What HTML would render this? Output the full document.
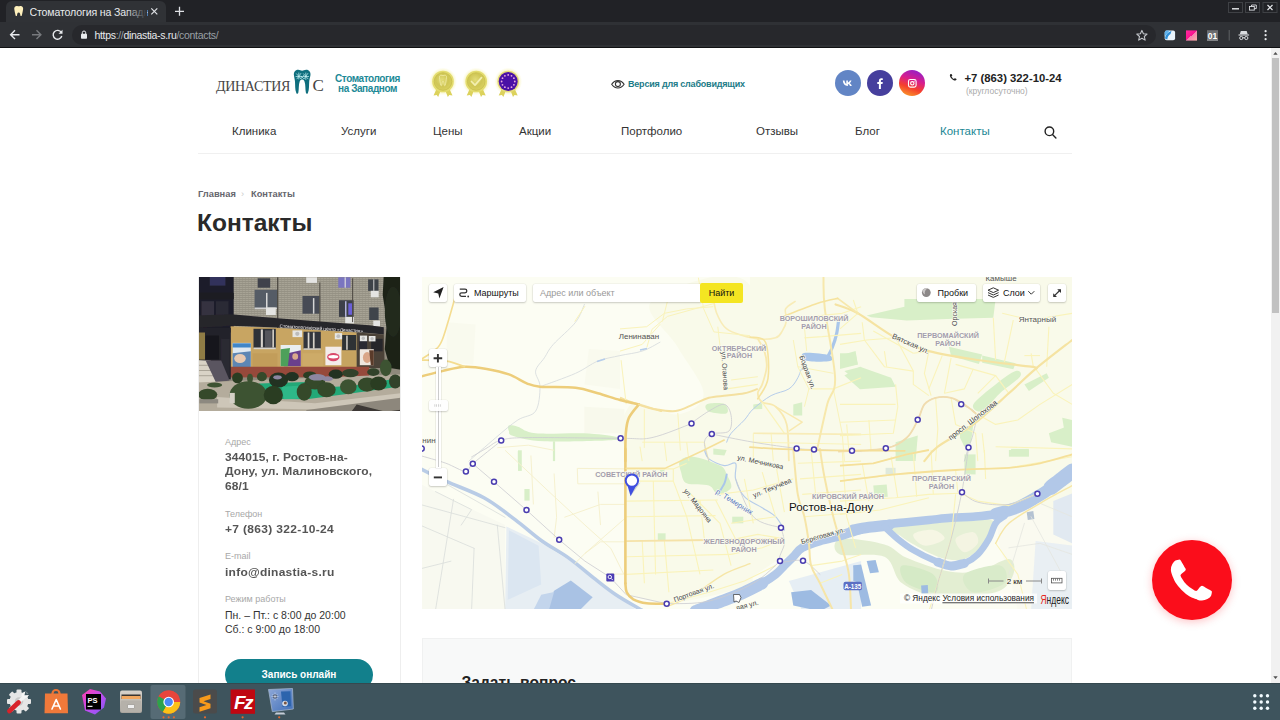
<!DOCTYPE html>
<html lang="ru">
<head>
<meta charset="utf-8">
<title>Стоматология на Западном</title>
<style>
*{box-sizing:border-box;margin:0;padding:0}
html,body{width:1280px;height:720px;overflow:hidden;background:#fff}
body{position:relative;font-family:"Liberation Sans",sans-serif;color:#333}
.abs{position:absolute}
/* ---------- browser chrome ---------- */
#tabstrip{left:0;top:0;width:1280px;height:23px;background:#212226}
#tab{left:5.5px;top:1px;width:160px;height:22px;background:#303236;border-radius:6px 6px 0 0}
#tabtitle{left:29.5px;top:3.5px;width:118px;height:16px;overflow:hidden;white-space:nowrap;font:10.6px/16px "Liberation Sans",sans-serif;letter-spacing:-.15px;color:#e8eaed}
#tabfade{left:125px;top:3px;width:22px;height:18px;background:linear-gradient(90deg,rgba(48,50,54,0),#303236)}
#toolbar{left:0;top:22px;width:1280px;height:25px;background:#2f3135}
#toolbarline{left:0;top:46.5px;width:1280px;height:1.5px;background:#101113}
#omni{left:72px;top:25px;width:1084px;height:20px;border-radius:10px;background:#27282c}
#url{left:94.5px;top:28px;font:10.5px/14px "Liberation Sans",sans-serif;letter-spacing:-.32px;color:#e8eaed;white-space:nowrap}
#url span{color:#9aa0a6}
/* ---------- page ---------- */
#page{left:0;top:0;width:1272px;height:684px;background:#fff;overflow:hidden}
#sbar{left:1271px;top:48px;width:9px;height:636px;background:#f1f1f1}
#sthumb{left:1272px;top:58px;width:7px;height:255px;background:#c1c1c1}

/* ---------- site ---------- */
.t{position:absolute;white-space:nowrap;font-family:"Liberation Sans",sans-serif}
#logo1{left:216px;top:77.5px;font:14px/18px "Liberation Serif",serif;color:#444;letter-spacing:-.3px}
#logo2{left:312.5px;top:76px;font:17px/20px "Liberation Serif",serif;color:#444}
#slogan{left:327.5px;top:73.7px;width:80px;text-align:center;font:bold 10px/10.6px "Liberation Sans",sans-serif;letter-spacing:-.42px;color:#1d8a97;white-space:normal}
#vis{left:628px;top:78.3px;font:bold 9px/12px "Liberation Sans",sans-serif;letter-spacing:-.2px;color:#1b7b88}
.soc{position:absolute;top:70px;width:26px;height:26px;border-radius:50%}
#hphone{left:964.5px;top:70.5px;font:bold 11.3px/14px "Liberation Sans",sans-serif;color:#222}
#hphone2{left:966px;top:86px;font:8.5px/11px "Liberation Sans",sans-serif;color:#aaa}
.nav{top:124px;font:11.5px/14px "Liberation Sans",sans-serif;color:#333}
#navline{left:198px;top:153px;width:874px;height:1px;background:#f0f0f0}
.bc{top:187.5px;font:bold 9.3px/12px "Liberation Sans",sans-serif;color:#66666e}
#h1{left:197px;top:208.5px;font:bold 24.5px/28px "Liberation Sans",sans-serif;color:#2a2a2a}
#card{left:198px;top:277px;width:203px;height:420px;border:1px solid #eee;background:#fff}
#photo{left:199px;top:277px;width:201px;height:134px;overflow:hidden;background:#444}
.lbl{left:225px;font:9px/12px "Liberation Sans",sans-serif;color:#a8a8a8}
.val{left:225px;font:bold 12px/15.9px "Liberation Sans",sans-serif;color:#555;transform:scaleY(.9);transform-origin:0 0}
.hrs{left:225px;font:10.5px/14px "Liberation Sans",sans-serif;color:#333}
#btn{left:225px;top:659px;width:148px;height:32px;border-radius:16px;background:#12808c;color:#fff;text-align:center;font:bold 10px/32px "Liberation Sans",sans-serif}
#map{left:422px;top:277px;width:650px;height:332px;overflow:hidden;background:#fbf8e6}
#form{left:422px;top:638px;width:650px;height:80px;background:#f8f9f9;border:1px solid #f0f1f1}
#formh{left:461.5px;top:673.3px;font:bold 15.6px/20px "Liberation Sans",sans-serif;color:#222}
#call{left:1152px;top:540px;width:80px;height:80px;border-radius:50%;background:#fb0d1b;box-shadow:0 2px 8px rgba(250,20,30,.25)}
/* ---------- taskbar ---------- */
#taskbar{left:0;top:683.300px;width:1280px;height:37px;background:#3e545d;border-top:1.300px solid #35494f}
</style>
</head>
<body>
<!-- page -->
<div id="page" class="abs">

<div id="logo1" class="t">ДИНАСТИЯ</div>
<div id="logo2" class="t">С</div>
<div id="slogan" class="t">Стоматология<br>на Западном</div>
<svg class="abs" style="left:420px;top:60px" width="120" height="45" viewBox="420 60 120 45">
<defs>
<radialGradient id="gld" cx="45%" cy="40%" r="60%"><stop offset="0" stop-color="#e2dc78"/><stop offset=".6" stop-color="#cfc655"/><stop offset="1" stop-color="#d9d05e"/></radialGradient>
<radialGradient id="glow" cx="50%" cy="50%" r="50%"><stop offset=".7" stop-color="#f6f1a8" stop-opacity=".9"/><stop offset="1" stop-color="#fbf8d0" stop-opacity="0"/></radialGradient>
</defs>
<g id="m1">
<circle cx="443" cy="81.500" r="14" fill="url(#glow)"/>
<path d="M436.500 89l-3 6.500 3.200-.6 1.500 2 2.300-6zM449.500 89l3 6.500-3.200-.6-1.500 2-2.300-6z" fill="#dcd25c"/>
<circle cx="443" cy="81.500" r="10.800" fill="#e3dc6e"/>
<circle cx="443" cy="81.500" r="8.800" fill="url(#gld)" stroke="#c7bd4c" stroke-width=".8"/>
</g>
<path d="M439.500 77.500c-.3-1.300.5-2.300 1.600-2.300.8 0 1.200.5 1.900.5s1.100-.5 1.900-.5c1.100 0 1.900 1 1.600 2.300-.4 2-.5 5-1.300 7.800-.2.600-.8.600-.9 0-.3-1.800-.3-4-1.300-4s-1 2.200-1.300 4c-.1.600-.7.600-.9 0-.8-2.800-.9-5.800-1.300-7.800z" fill="none" stroke="#efeaa0" stroke-width=".9"/>
<use href="#m1" x="33.200"/>
<path d="M471.500 81.500l3.500 3.600 6.500-7.500" fill="none" stroke="#f3efb0" stroke-width="1.700" stroke-linecap="round" stroke-linejoin="round"/>
<g>
<circle cx="508.200" cy="81.500" r="14" fill="url(#glow)"/>
<path d="M501.700 89l-3 6.500 3.200-.6 1.500 2 2.300-6zM514.700 89l3 6.500-3.200-.6-1.500 2-2.300-6z" fill="#dcd25c"/>
<circle cx="508.200" cy="81.500" r="10.800" fill="#e6dc7a"/>
<circle cx="508.200" cy="81.500" r="9.500" fill="#4a12a6"/>
<g fill="#e9a9e0"><circle cx="508.200" cy="74.900" r=".9"/><circle cx="511.500" cy="75.800" r=".9"/><circle cx="513.900" cy="78.200" r=".9"/><circle cx="514.800" cy="81.500" r=".9"/><circle cx="513.900" cy="84.800" r=".9"/><circle cx="511.500" cy="87.200" r=".9"/><circle cx="508.200" cy="88.100" r=".9"/><circle cx="504.900" cy="87.200" r=".9"/><circle cx="502.500" cy="84.800" r=".9"/><circle cx="501.600" cy="81.500" r=".9"/><circle cx="502.500" cy="78.200" r=".9"/><circle cx="504.900" cy="75.800" r=".9"/></g>
</g>
</svg>

<div id="vis" class="t">Версия для слабовидящих</div>
<div class="soc" style="left:835px;background:#6285c5"></div>
<div class="soc" style="left:867px;background:#463f9d"></div>
<div class="soc" style="left:899px;background:linear-gradient(200deg,#8a1fd0 5%,#d81e8c 40%,#f5402c 65%,#f9a02a 95%)"></div>
<div id="hphone" class="t">+7 (863) 322-10-24</div>
<div id="hphone2" class="t">(круглосуточно)</div>
<div class="t nav" style="left:232px">Клиника</div>
<div class="t nav" style="left:341px">Услуги</div>
<div class="t nav" style="left:433px">Цены</div>
<div class="t nav" style="left:519px">Акции</div>
<div class="t nav" style="left:621px">Портфолио</div>
<div class="t nav" style="left:756px">Отзывы</div>
<div class="t nav" style="left:855px">Блог</div>
<div class="t nav" style="left:940px;color:#1b8794">Контакты</div>
<div id="navline" class="abs"></div>
<div class="t bc" style="left:198px">Главная</div>
<div class="t bc" style="left:241px;color:#ccc;font-weight:normal">›</div>
<div class="t bc" style="left:251px">Контакты</div>
<div id="h1" class="t">Контакты</div>
<div id="card" class="abs"></div>
<div id="photo" class="abs"><svg width="201" height="134" viewBox="0 0 201 134" style="position:absolute;left:0;top:0;font-family:'Liberation Sans',sans-serif">
<defs><filter id="pb" x="-5%" y="-5%" width="110%" height="110%"><feGaussianBlur stdDeviation=".7"/></filter>
<pattern id="brick" width="3" height="2" patternUnits="userSpaceOnUse"><rect width="3" height="2" fill="#a7a395"/><rect width="3" height=".6" fill="#8a867a"/><rect x="1.400" width=".5" height="2" fill="#959184"/></pattern></defs>
<g filter="url(#pb)">
<rect x="-2.8" y="-2.8" width="206.2" height="141.7" fill="#8f897b"/>
<rect x="33.7" y="-2.8" width="158.3" height="54.2" fill="url(#brick)"/>
<rect x="-2.8" y="-2.8" width="37.5" height="58.3" fill="#1f1e29"/>
<rect x="10.8" y="-1.8" width="15.6" height="10.4" fill="#30335c"/>
<rect x="2.5" y="24.2" width="12.5" height="15.6" fill="#34333f"/>
<rect x="17.0" y="24.2" width="12.5" height="15.6" fill="#2b2a35"/>
<rect x="-2.8" y="15.9" width="37.5" height="6.2" fill="#1c1b22"/>
<rect x="55.6" y="12.8" width="22.9" height="18.8" fill="#555c66"/>
<rect x="67.0" y="15.9" width="1.5" height="15.6" fill="#d9d9d9"/>
<rect x="55.6" y="30.5" width="22.9" height="1.7" fill="#cfcfcf"/>
<rect x="58.7" y="1.3" width="12.5" height="9.4" fill="#3f434b"/>
<rect x="103.5" y="19.0" width="17.7" height="17.7" fill="#474c55"/>
<rect x="113.9" y="21.1" width="1.5" height="15.6" fill="#d5d5d5"/>
<rect x="140.0" y="23.2" width="14.6" height="16.7" fill="#3d4049"/>
<rect x="146.2" y="24.2" width="1.2" height="15.6" fill="#cfd0ff"/>
<rect x="149.3" y="26.3" width="4.2" height="11.5" fill="#6a5fd8"/>
<rect x="139.3" y="0.3" width="12.1" height="10.4" fill="#7a74c0"/>
<rect x="145.6" y="0.3" width="1.2" height="10.4" fill="#ddd"/>
<rect x="169.1" y="2.4" width="10.4" height="11.5" fill="#3d424a"/>
<rect x="170.2" y="30.5" width="9.4" height="12.5" fill="#3f444c"/>
<rect x="174.3" y="2.4" width="1.0" height="11.5" fill="#d0d0d0"/>
<rect x="67.0" y="30.5" width="9.8" height="7.5" fill="#e4e4e2"/>
<rect x="107.2" y="0.3" width="10.8" height="5.6" fill="#e4e4e2"/>
<rect x="146.2" y="39.9" width="8.8" height="6.5" fill="#e4e4e2"/>
<rect x="171.8" y="13.8" width="7.9" height="6.5" fill="#e4e4e2"/>
<rect x="174.3" y="43.6" width="6.7" height="5.6" fill="#e4e4e2"/>
<rect x="78.1" y="0.3" width="1.2" height="51.0" fill="#4a463f"/>
<rect x="120.2" y="5.5" width="1.2" height="39.6" fill="#5a564e"/>
<rect x="153.1" y="1.3" width="1.0" height="43.8" fill="#4e4a44"/>
<path d="M184.8 -2.8 L203.5 -2.8 L203.5 93.0 L191.0 90.9 L185.8 72.2 L187.9 45.1 L183.7 18.0 Z" fill="#1c2219"/>
<ellipse cx="194.1" cy="34.7" rx="8.3" ry="25.0" fill="#232b1f"/>
<path d="M-2.8 38.4 L32.7 37.2 L78.5 41.3 L170.2 48.2 L184.8 50.3 L184.8 57.6 L170.2 55.9 L78.5 50.5 L30.6 48.8 L-2.8 50.9 Z" fill="#27252b"/>
<text x="80.6" y="50.5" font-size="4.600" fill="#f2f2f2" transform="rotate(3.500 80.6 50.5)" textLength="83.3" lengthAdjust="spacingAndGlyphs">Стоматологический центр «Династия»</text>
<path d="M31.6 49.2 L78.5 50.9 L157.7 55.5 L157.7 90.9 L31.6 90.9 Z" fill="#c8a562"/>
<rect x="53.5" y="76.3" width="25.0" height="14.6" fill="#c29d5a"/>
<rect x="103.5" y="76.3" width="20.8" height="13.5" fill="#cdab68"/>
<rect x="142.0" y="75.3" width="15.6" height="14.6" fill="#c6a360"/>
<path d="M157.7 55.5 L184.8 57.6 L185.8 90.9 L157.7 90.9 Z" fill="#4b4339"/>
<rect x="54.5" y="51.8" width="22.3" height="19.6" fill="#2f3138"/>
<rect x="61.8" y="52.4" width="2.1" height="18.1" fill="#d7d3cc"/>
<rect x="73.3" y="52.4" width="1.7" height="18.1" fill="#cfcac2"/>
<rect x="66.0" y="53.4" width="6.7" height="16.7" fill="#55565c"/>
<rect x="54.5" y="70.5" width="22.3" height="1.7" fill="#d8d4cc"/>
<rect x="104.5" y="54.7" width="17.3" height="17.5" fill="#33353c"/>
<rect x="108.7" y="55.5" width="1.7" height="16.2" fill="#dcd8d0"/>
<rect x="113.9" y="55.5" width="1.7" height="16.2" fill="#d4d0c8"/>
<rect x="104.5" y="71.3" width="17.3" height="1.5" fill="#d6d2ca"/>
<rect x="143.1" y="58.0" width="14.0" height="15.2" fill="#2e3036"/>
<rect x="147.2" y="58.6" width="1.5" height="14.2" fill="#d6d2ca"/>
<rect x="159.8" y="59.2" width="8.3" height="14.0" fill="#2a2b30"/>
<rect x="172.2" y="61.8" width="11.5" height="12.5" fill="#26272b"/>
<rect x="93.5" y="53.4" width="9.6" height="6.7" fill="#e6e6e4"/>
<rect x="135.8" y="56.1" width="7.3" height="6.2" fill="#e6e6e4"/>
<rect x="160.8" y="58.6" width="7.3" height="5.6" fill="#e6e6e4"/>
<rect x="169.8" y="59.0" width="6.7" height="5.4" fill="#e6e6e4"/>
<ellipse cx="98.3" cy="56.8" rx="2.1" ry="2.1" fill="#bcbcbc"/>
<ellipse cx="139.3" cy="59.2" rx="1.9" ry="1.9" fill="#bdbdbd"/>
<ellipse cx="164.3" cy="61.3" rx="1.7" ry="1.7" fill="#bdbdbd"/>
<ellipse cx="173.1" cy="61.8" rx="1.7" ry="1.7" fill="#bdbdbd"/>
<rect x="33.7" y="65.9" width="18.1" height="24.4" fill="#dfe9f2"/>
<path d="M33.7 76.3 L51.8 74.2 L51.8 90.3 L33.7 90.3 Z" fill="#5d86b4"/>
<ellipse cx="41.0" cy="81.5" rx="5.8" ry="4.6" fill="#e8c9b0"/>
<rect x="33.7" y="66.3" width="18.1" height="4.2" fill="#3f86c8"/>
<rect x="81.6" y="68.0" width="20.2" height="21.2" fill="#e9edf0"/>
<path d="M88.9 76.3 L101.8 73.2 L101.8 89.2 L84.8 89.2 Z" fill="#6a3f8c"/>
<ellipse cx="96.2" cy="79.5" rx="2.9" ry="3.3" fill="#d9a98c"/>
<path d="M81.6 72.2 L91.0 71.1 L88.9 89.2 L81.6 89.2 Z" fill="#4da05a"/>
<rect x="126.4" y="69.7" width="16.0" height="18.5" fill="#f3ecea"/>
<ellipse cx="134.3" cy="80.1" rx="6.2" ry="4.2" fill="#d9486a"/>
<ellipse cx="134.3" cy="79.7" rx="5.0" ry="1.7" fill="#ffffff"/>
<rect x="160.8" y="72.2" width="14.0" height="16.0" fill="#efe6df"/>
<ellipse cx="168.1" cy="80.5" rx="4.2" ry="5.4" fill="#d9a588"/>
<path d="M170.2 73.2 L174.8 73.2 L174.8 88.2 L171.8 88.2 Z" fill="#5a3a2a"/>
<path d="M30.6 89.7 L170.2 89.7 L170.2 99.7 L30.6 100.5 Z" fill="#96483a"/>
<rect x="-2.8" y="50.9" width="34.6" height="51.5" fill="#24232b"/>
<rect x="-2.8" y="55.5" width="8.8" height="27.1" fill="#8f7c45"/>
<rect x="6.6" y="58.6" width="13.5" height="24.0" fill="#17161c"/>
<rect x="22.2" y="61.8" width="8.3" height="39.6" fill="#2c2a33"/>
<path d="M-2.8 83.0 L11.8 83.8 L17.0 105.5 L-2.8 107.2 Z" fill="#d9d3c6"/>
<rect x="-2.8" y="87.8" width="16.7" height="1.0" fill="#aaa497"/>
<rect x="-2.8" y="93.0" width="17.9" height="1.0" fill="#aaa497"/>
<rect x="-2.8" y="98.2" width="18.8" height="1.0" fill="#aaa497"/>
<path d="M6.6 83.6 L22.2 83.6 L30.6 103.4 L17.0 105.5 Z" fill="#5a5560"/>
<path d="M-2.8 105.5 L203.5 97.2 L203.5 138.8 L-2.8 138.8 Z" fill="#b4ac9c"/>
<path d="M18.1 120.1 L116.0 126.3 L203.5 115.9 L203.5 126.3 L120.2 132.6 L18.1 130.5 Z" fill="#cdc6b8"/>
<path d="M107.7 133.0 L203.5 120.5 L203.5 138.8 L103.5 138.8 Z" fill="#8d877c"/>
<path d="M157.7 127.4 L186.8 134.7 L203.5 132.6 L203.5 138.8 L149.3 138.8 Z" fill="#3c3935"/>
<path d="M59.8 106.5 L107.7 105.1 L136.8 109.7 L153.5 108.8 L199.3 101.3 L199.3 109.7 L153.5 116.3 L107.7 122.2 L61.8 121.8 Z" fill="#22a877"/>
<path d="M82.7 109.7 L99.3 108.8 L100.4 121.8 L84.8 122.2 Z" fill="#2fb888"/>
<ellipse cx="38.5" cy="100.9" rx="5.4" ry="5.4" fill="#2b3d24"/>
<ellipse cx="51.0" cy="101.3" rx="2.9" ry="4.6" fill="#3d5332"/>
<ellipse cx="62.9" cy="99.7" rx="5.0" ry="4.6" fill="#34482a"/>
<ellipse cx="79.5" cy="103.0" rx="9.6" ry="7.5" fill="#223220"/>
<ellipse cx="93.1" cy="99.7" rx="6.7" ry="4.6" fill="#223220"/>
<ellipse cx="110.8" cy="98.2" rx="6.7" ry="3.8" fill="#2b3d24"/>
<ellipse cx="116.0" cy="105.5" rx="10.4" ry="7.1" fill="#34482a"/>
<ellipse cx="105.2" cy="114.9" rx="7.5" ry="8.8" fill="#34482a"/>
<ellipse cx="127.5" cy="112.8" rx="9.2" ry="7.5" fill="#34482a"/>
<ellipse cx="136.8" cy="97.2" rx="7.1" ry="4.6" fill="#223220"/>
<ellipse cx="151.4" cy="96.1" rx="8.3" ry="4.2" fill="#30432a"/>
<ellipse cx="149.3" cy="109.7" rx="8.3" ry="7.5" fill="#3d5332"/>
<ellipse cx="168.1" cy="107.6" rx="9.2" ry="7.1" fill="#34482a"/>
<ellipse cx="179.5" cy="106.5" rx="8.3" ry="7.1" fill="#2b3d24"/>
<ellipse cx="196.2" cy="104.5" rx="6.2" ry="7.1" fill="#30432a"/>
<ellipse cx="174.3" cy="95.1" rx="6.2" ry="3.8" fill="#30432a"/>
<ellipse cx="186.8" cy="90.9" rx="5.8" ry="8.3" fill="#3d5332"/>
<ellipse cx="49.3" cy="118.0" rx="18.8" ry="13.8" fill="#3d5332"/>
<ellipse cx="74.3" cy="118.0" rx="9.6" ry="9.2" fill="#2b3d24"/>
<ellipse cx="8.7" cy="117.6" rx="9.6" ry="5.8" fill="#34482a"/>
<ellipse cx="15.6" cy="108.0" rx="7.5" ry="2.5" fill="#3d5332"/>
<ellipse cx="118.1" cy="100.3" rx="8.3" ry="3.3" fill="#8d86a0"/>
<ellipse cx="128.5" cy="101.8" rx="5.4" ry="2.5" fill="#8d86a0"/>
<ellipse cx="78.5" cy="100.3" rx="4.2" ry="2.1" fill="#8d86a0"/>
<rect x="0.4" y="122.2" width="18.8" height="4.2" fill="#8d8980"/>
<rect x="30.6" y="115.9" width="5.2" height="10.4" fill="#d4d0c6"/>
</g></svg></div>
<div class="t lbl" style="top:436px">Адрес</div>
<div class="t val" style="top:451.4px;letter-spacing:.08px">344015, г. Ростов-на-<br>Дону, ул. Малиновского,<br>68/1</div>
<div class="t lbl" style="top:507.8px">Телефон</div>
<div class="t val" style="top:522.8px;letter-spacing:.33px">+7 (863) 322-10-24</div>
<div class="t lbl" style="top:550.2px">E-mail</div>
<div class="t val" style="top:565.8px;letter-spacing:.25px">info@dinastia-s.ru</div>
<div class="t lbl" style="top:593px">Режим работы</div>
<div class="t hrs" style="top:608px">Пн. – Пт.: с 8:00 до 20:00<br>Сб.: с 9:00 до 18:00</div>
<div id="btn" class="abs">Запись онлайн</div>
<div id="map" class="abs"><svg width="650" height="332" viewBox="422 277 650 332" style="position:absolute;left:0;top:0;font-family:'Liberation Sans',sans-serif">
<rect x="422" y="277" width="650" height="332" fill="#fcfdf3"/>
<path d="M652.0 300.9 C664.0 290.6 733.7 260.6 750.0 285.5 C766.3 310.4 769.8 423.0 750.0 450.5 C730.2 478.0 651.2 458.2 631.4 450.5 C611.6 442.8 623.7 410.1 631.4 404.1 C639.1 398.1 665.8 416.1 677.8 414.4 C689.8 412.7 703.6 404.9 703.6 393.7 C703.6 382.5 686.4 362.8 677.8 347.3 C669.2 331.8 640.0 311.2 652.0 300.9Z" fill="#f9faea"/>
<rect x="750" y="277" width="322" height="250" fill="#f9faea"/>
<path d="M626.2 438.7 L752.6 438.7 L752.6 584.4 L716.5 594.7 L667.5 605.0 L626.2 594.7Z" fill="#f9faea"/>
<path d="M748.7 438.7 L1007.8 438.7 L1007.8 507.0 L878.9 522.5 L840.2 532.8 L775.8 561.2 L748.7 579.2Z" fill="#f9faea"/>
<path d="M584.4 406.7 L624.4 408.9 L624.4 433.3 L584.4 433.3Z" fill="#f8f9ec"/>
<path d="M588.9 348.9 L620.0 351.1 L620.0 388.9 L584.4 384.4Z" fill="#f9faee"/>
<path d="M446.7 322.2 L475.6 324.4 L473.3 364.4 L446.7 362.2Z" fill="#f9faee"/>
<path d="M420.0 483.8 L450.9 499.3 L505.1 525.1 L505.1 610.1 L420.0 610.1Z" fill="#f8f9f0"/>
<path d="M506.4 526.4 L541.2 543.1 L574.7 563.7 L615.9 594.7 L636.6 610.1 L505.1 610.1Z" fill="#e7eef3"/>
<path d="M508.9 530.2 L538.6 545.7 L541.2 584.4 L507.7 599.8Z" fill="#dbe6f1"/>
<path d="M554.1 590.8 L570.8 580.5 L592.7 597.3 L579.8 610.1 L543.7 610.1Z" fill="#a9c2e4"/>
<path d="M541.2 594.7 L554.1 592.1 L548.9 610.1 L533.4 610.1Z" fill="#c3d5ec"/>
<path d="M995.6 514.4 L1040.0 503.3 L1072.2 523.3 L1072.2 610.0 L1017.8 610.0 L1008.9 574.4 L1000.0 547.8Z" fill="#fafaf0"/>
<path d="M1053.3 501.1 L1072.2 493.3 L1072.2 543.3 L1053.3 534.4Z" fill="#e1e9f1"/>
<path d="M1035.6 541.1 L1072.2 545.6 L1072.2 610.0 L1031.1 610.0Z" fill="#e9eff3"/>
<path d="M1026.7 512.2 L1033.3 511.1 L1034.4 518.9 L1027.8 520.0Z" fill="#b4c2d2"/>
<path d="M866.7 315.6 L904.4 306.7 L904.4 298.9 L995.6 298.9 L993.3 317.8 L946.7 318.9 L906.7 320.4 L871.1 317.3Z" fill="#d8efc8"/>
<path d="M844.4 375.6 L860.0 366.7 L891.1 377.8 L895.6 386.7 L860.0 389.3Z" fill="#d8efc8"/>
<path d="M840.0 353.3 L855.6 353.3 L857.8 364.4 L840.0 368.9Z" fill="#d8efc8"/>
<path d="M948.9 346.7 L982.2 354.4 L978.9 364.0 L951.1 356.0Z" fill="#d8efc8"/>
<path d="M982.2 355.6 L1015.6 363.3 L1013.3 369.3 L982.2 362.7Z" fill="#d8efc8"/>
<path d="M973.3 404.4 C975.5 399.9 988.5 389.9 995.6 384.4 C1002.7 378.8 1011.5 372.4 1015.6 371.1 C1019.7 369.8 1022.6 373.0 1020.0 376.7 C1017.4 380.4 1006.3 387.6 1000.0 393.3 C993.7 399.0 986.7 409.2 982.2 411.1 C977.8 413.0 971.1 408.8 973.3 404.4Z" fill="#d8efc8"/>
<path d="M1024.4 384.4 L1046.7 373.3 L1048.9 377.8 L1028.9 391.1Z" fill="#d8efc8"/>
<path d="M960.0 428.9 L973.3 424.4 L971.1 442.2 L964.4 446.7 L960.0 437.8Z" fill="#d8efc8"/>
<path d="M895.6 442.2 L917.8 435.6 L915.6 461.1 L895.6 461.1Z" fill="#d8efc8"/>
<path d="M1048.9 433.3 L1072.2 424.4 L1072.2 446.7 L1051.1 442.2Z" fill="#d8efc8"/>
<path d="M1011.1 448.9 L1028.9 448.9 L1028.9 455.6 L1011.1 455.6Z" fill="#d8efc8"/>
<path d="M1062.2 417.8 L1072.2 420.0 L1072.2 433.3 L1064.4 431.1Z" fill="#d8efc8"/>
<path d="M840.0 355.6 L855.6 351.1 L857.8 364.4 L842.2 366.7Z" fill="#d8efc8"/>
<path d="M844.4 371.1 L861.1 366.7 L861.1 384.4Z" fill="#d8efc8"/>
<path d="M706.7 404.4 C709.3 403.1 721.1 402.5 724.4 404.0 C727.7 405.5 729.3 412.0 726.7 413.3 C724.1 414.6 712.2 413.1 708.9 411.6 C705.6 410.1 704.1 405.7 706.7 404.4Z" fill="#d8efc8"/>
<path d="M793.3 404.4 L802.2 402.2 L802.2 415.6 L793.3 415.6Z" fill="#d8efc8"/>
<path d="M713.3 448.4 L726.7 450.0 L724.4 455.6 L713.3 454.4Z" fill="#d8efc8"/>
<path d="M753.3 404.4 L762.2 403.3 L762.2 408.9 L753.3 409.3Z" fill="#d8efc8"/>
<path d="M508.9 425.6 C510.4 424.9 513.3 425.4 517.8 426.7 C522.2 428.0 524.5 432.2 535.6 433.3 C546.7 434.4 571.1 432.7 584.4 433.3 C597.7 433.9 610.4 435.6 615.6 436.7 C620.8 437.8 627.5 439.2 615.6 440.0 C603.7 440.8 561.5 442.0 544.4 441.3 C527.3 440.6 519.2 437.7 513.3 436.0 C507.4 434.3 509.6 432.8 508.9 431.1 C508.2 429.4 507.4 426.3 508.9 425.6Z" fill="#d8efc8"/>
<path d="M552.9 441.3 L555.1 441.3 L555.1 461.1 L552.9 461.1Z" fill="#d8efc8"/>
<path d="M517.8 451.1 L520.4 451.1 L520.4 461.1 L517.8 461.1Z" fill="#d8efc8"/>
<path d="M680.0 461.1 C682.0 458.5 686.6 455.9 693.3 456.7 C700.0 457.4 714.4 462.7 720.0 465.6 C725.6 468.6 724.9 470.7 726.7 474.4 C728.6 478.1 732.6 484.5 731.1 487.8 C729.6 491.1 721.5 494.8 717.8 494.4 C714.1 494.0 714.1 487.5 708.9 485.6 C703.7 483.8 691.3 485.5 686.7 483.3 C682.1 481.1 682.2 475.9 681.1 472.2 C680.0 468.5 678.0 463.7 680.0 461.1Z" fill="#d8efc8"/>
<path d="M657.8 533.3 L665.6 533.3 L665.6 540.0 L657.8 540.0Z" fill="#d8efc8"/>
<path d="M732.2 516.7 L743.3 516.7 L743.3 523.3 L732.2 523.3Z" fill="#d8efc8"/>
<path d="M660.0 470.0 L664.4 470.0 L664.4 474.4 L660.0 474.4Z" fill="#d8efc8"/>
<path d="M518.0 450.3 L521.8 450.3 L521.8 470.9 L518.0 470.9Z" fill="#d8efc8"/>
<path d="M524.4 489.0 L529.6 489.0 L529.6 500.6 L524.4 500.6Z" fill="#d8efc8"/>
<path d="M873.3 485.6 L886.7 484.4 L887.8 496.7 L874.4 497.8Z" fill="#d8efc8"/>
<path d="M895.6 450.0 L913.3 450.0 L911.1 458.9 L896.7 460.0Z" fill="#d8efc8"/>
<path d="M964.4 454.4 L975.6 454.4 L975.6 474.4 L964.4 474.4Z" fill="#d8efc8"/>
<path d="M1008.9 450.0 L1028.9 450.0 L1028.9 456.7 L1008.9 456.7Z" fill="#d8efc8"/>
<path d="M885.6 467.8 L895.6 467.8 L895.6 474.4 L885.6 474.4Z" fill="#dfe9dc"/>
<path d="M891.1 526.7 C895.9 524.5 916.7 523.3 928.9 522.2 C941.1 521.1 953.7 520.2 964.4 520.0 C975.1 519.8 989.6 518.0 993.3 521.1 C997.0 524.2 989.7 533.7 986.7 538.9 C983.8 544.1 980.1 548.7 975.6 552.2 C971.1 555.7 966.3 559.2 960.0 560.0 C953.7 560.8 945.2 559.1 937.8 556.7 C930.4 554.3 921.9 549.1 915.6 545.6 C909.3 542.1 904.1 538.8 900.0 535.6 C895.9 532.5 886.3 528.9 891.1 526.7Z" fill="#e6f0d6"/>
<path d="M913.3 534.4 C914.8 531.8 928.1 529.2 933.3 530.0 C938.5 530.8 945.9 536.3 944.4 538.9 C942.9 541.5 929.6 546.4 924.4 545.6 C919.2 544.9 911.8 537.0 913.3 534.4Z" fill="#f6f6e4"/>
<path d="M955.6 538.9 C957.1 535.6 969.6 531.5 973.3 532.2 C977.0 532.9 979.3 540.0 977.8 543.3 C976.3 546.6 968.1 552.9 964.4 552.2 C960.7 551.5 954.1 542.2 955.6 538.9Z" fill="#f4f4e2"/>
<path d="M840.0 538.9 C847.4 537.2 873.3 541.2 884.4 544.4 C895.5 547.5 896.3 553.3 906.7 557.8 C917.1 562.2 934.9 568.9 946.7 571.1 C958.6 573.3 967.4 573.1 977.8 571.1 C988.2 569.1 1003.0 558.4 1008.9 558.9 C1014.8 559.4 1015.5 568.8 1013.3 574.4 C1011.1 580.0 1007.8 588.5 995.6 592.2 C983.4 595.9 955.6 598.2 940.0 596.7 C924.4 595.2 911.5 590.0 902.2 583.3 C892.9 576.6 894.8 561.5 884.4 556.7 C874.0 551.9 847.4 557.4 840.0 554.4 C832.6 551.4 832.6 540.6 840.0 538.9Z" fill="#e3eed2"/>
<path d="M902.2 565.6 C906.6 564.1 927.7 570.0 933.3 574.4 C938.9 578.8 940.0 590.7 935.6 592.2 C931.2 593.7 912.3 587.7 906.7 583.3 C901.1 578.9 897.8 567.1 902.2 565.6Z" fill="#d5eac6"/>
<path d="M964.4 574.4 C968.9 570.0 993.3 564.1 1000.0 565.6 C1006.7 567.1 1008.9 578.9 1004.4 583.3 C999.9 587.7 980.0 593.7 973.3 592.2 C966.6 590.7 959.9 578.8 964.4 574.4Z" fill="#d9ebca"/>
<path d="M788.9 581.1 L861.1 561.1 L861.1 611.1 L802.2 611.1Z" fill="#e6eef4"/>
<path d="M791.1 592.2 L811.1 590.0 L831.1 605.6 L820.0 611.1 L793.3 605.6Z" fill="#9dbbe2"/>
<path d="M853.3 565.6 L861.1 565.6 L861.1 583.3 L853.3 581.1Z" fill="#9dbbe2"/>
<path d="M853.3 565.6 L861.1 564.4 L871.1 605.6 L862.2 606.7Z" fill="#9dbbe2"/>
<path d="M866.7 561.1 L875.6 560.0 L878.9 572.2 L870.0 573.3Z" fill="#9dbbe2"/>
<path d="M921.1 585.6 L927.8 585.1 L928.2 593.3 L921.6 593.8Z" fill="#9dbbe2"/>
<path d="M838.9 317.8 C838.5 320.4 837.8 328.3 836.7 333.3 C835.6 338.3 833.7 343.9 832.2 347.8 C830.7 351.7 828.5 355.2 827.8 356.7" fill="none" stroke="#a9c6ea" stroke-width="3.2" stroke-linejoin="round" stroke-linecap="round"/>
<path d="M804.0 352.9 C807.9 352.0 824.6 353.7 828.9 355.1 C833.2 356.5 833.9 360.2 830.0 361.1 C826.1 362.0 809.9 361.8 805.6 360.4 C801.3 359.0 800.1 353.8 804.0 352.9Z" fill="#a9c6ea"/>
<path d="M804.4 360.0 C803.3 363.0 800.4 373.0 797.8 377.8 C795.2 382.6 793.3 385.9 788.9 388.9 C784.5 391.9 777.0 392.3 771.1 395.6 C765.2 398.9 757.8 404.8 753.3 408.9 C748.8 413.0 748.1 415.9 744.4 420.0 C740.7 424.1 734.0 429.6 731.1 433.3 C728.2 437.0 727.4 440.7 726.7 442.2" fill="none" stroke="#b6cdea" stroke-width="1" stroke-linejoin="round" stroke-linecap="round"/>
<path d="M704.4 450.0 C705.1 451.5 705.6 456.3 708.9 458.9 C712.2 461.5 719.9 464.9 724.4 465.6 C728.9 466.3 733.7 461.1 735.6 463.3 C737.5 465.5 734.1 473.3 735.6 478.9 C737.1 484.5 740.0 491.9 744.4 496.7 C748.8 501.5 757.0 504.5 762.2 507.8 C767.4 511.1 771.9 513.0 775.6 516.7 C779.3 520.4 782.9 527.8 784.4 530.0" fill="none" stroke="#b6cdea" stroke-width="1.2" stroke-linejoin="round" stroke-linecap="round"/>
<path d="M717.8 494.4 C718.9 492.5 722.9 486.6 724.4 483.3 C725.9 480.0 726.3 475.9 726.7 474.4" fill="none" stroke="#a9c6ea" stroke-width="2" stroke-linejoin="round" stroke-linecap="round"/>
<path d="M584.4 304.4 C582.9 307.4 580.8 315.5 575.6 322.2 C570.4 328.9 558.5 338.5 553.3 344.4 C548.1 350.3 547.3 353.4 544.4 357.8 C541.5 362.2 536.3 366.3 535.6 371.1 C534.9 375.9 540.0 380.0 540.0 386.7 C540.0 393.4 539.3 405.6 535.6 411.1 C531.9 416.7 524.5 415.6 517.8 420.0 C511.1 424.4 503.8 430.9 495.6 437.8 C487.5 444.7 473.3 457.2 468.9 461.1" fill="none" stroke="#d4d9dc" stroke-width="0.8" stroke-linejoin="round" stroke-linecap="round"/>
<path d="M660.0 342.2 C657.0 343.7 648.9 348.9 642.2 351.1 C635.5 353.3 627.4 353.9 620.0 355.6 C612.6 357.3 605.2 358.2 597.8 361.1 C590.4 364.1 585.2 369.0 575.6 373.3 C566.0 377.6 545.9 384.5 540.0 386.7" fill="none" stroke="#d4d9dc" stroke-width="0.8" stroke-linejoin="round" stroke-linecap="round"/>
<path d="M597 361.5l8 -2.5" stroke="#b6cdea" stroke-width="1.6"/><path d="M640 350l7 -1.5" stroke="#b6cdea" stroke-width="1.4"/>
<path d="M1072.2 472.2 C1068.7 474.8 1057.2 483.5 1051.1 487.8 C1045.0 492.1 1041.1 494.6 1035.6 497.8 C1030.0 501.1 1024.5 504.6 1017.8 507.3 C1011.1 510.0 1003.0 512.4 995.6 514.0 C988.2 515.6 980.7 516.1 973.3 516.7 C965.9 517.3 958.5 517.2 951.1 517.8 C943.7 518.3 936.3 519.3 928.9 520.0 C921.5 520.7 914.1 521.4 906.7 522.2 C899.3 523.0 891.8 523.7 884.4 524.7 C877.0 525.7 869.6 526.5 862.2 528.2 C854.8 529.9 843.7 533.8 840.0 534.9" fill="none" stroke="#b2c8e8" stroke-width="8.5" stroke-linejoin="round" stroke-linecap="round"/>
<path d="M1072.2 472.2 C1068.7 474.8 1057.2 483.5 1051.1 487.8 C1045.0 492.1 1041.1 494.6 1035.6 497.8 C1030.0 501.1 1024.5 504.6 1017.8 507.3 C1011.1 510.0 999.3 512.9 995.6 514.0" fill="none" stroke="#b2c8e8" stroke-width="12" stroke-linejoin="round" stroke-linecap="round"/>
<path d="M1072.2 471.1 C1070.5 472.4 1065.7 476.2 1062.2 478.9 C1058.7 481.6 1052.9 485.9 1051.1 487.3" fill="none" stroke="#b2c8e8" stroke-width="15" stroke-linejoin="round" stroke-linecap="round"/>
<path d="M853.3 530.0 C855.9 529.5 863.0 528.1 868.9 527.3 C874.8 526.5 885.6 525.5 888.9 525.1" fill="none" stroke="#b2c8e8" stroke-width="11" stroke-linejoin="round" stroke-linecap="round"/>
<path d="M861.1 529.6 C858.0 530.6 849.1 533.7 842.2 535.6 C835.4 537.5 826.7 539.1 820.0 541.1 C813.3 543.1 806.7 545.2 802.2 547.8 C797.8 550.4 796.3 553.7 793.3 556.7 C790.3 559.7 787.3 562.7 784.4 565.6 C781.5 568.5 779.3 571.5 775.6 574.4 C771.9 577.3 767.4 580.3 762.2 583.3 C757.0 586.3 750.3 589.5 744.4 592.2 C738.5 594.9 732.6 597.0 726.7 599.3 C720.8 601.6 714.1 604.0 708.9 606.0 C703.7 608.0 697.8 610.2 695.6 611.1" fill="none" stroke="#b2c8e8" stroke-width="8.5" stroke-linejoin="round" stroke-linecap="round"/>
<path d="M762.2 583.3 C759.2 584.8 750.3 589.5 744.4 592.2 C738.5 594.9 732.6 597.0 726.7 599.3 C720.8 601.6 714.1 604.0 708.9 606.0 C703.7 608.0 697.8 610.2 695.6 611.1" fill="none" stroke="#b2c8e8" stroke-width="12" stroke-linejoin="round" stroke-linecap="round"/>
<path d="M884.4 526.7 C886.6 528.7 893.0 535.0 897.8 538.9 C902.6 542.8 907.4 546.5 913.3 550.0 C919.2 553.5 927.0 557.4 933.3 560.0 C939.6 562.6 945.9 565.1 951.1 565.6 C956.3 566.1 960.0 565.2 964.4 563.3 C968.8 561.4 973.7 558.5 977.8 554.4 C981.9 550.3 985.9 544.1 988.9 538.9 C991.9 533.7 993.0 527.1 995.6 523.3 C998.2 519.5 1002.9 517.4 1004.4 516.2" fill="none" stroke="#b2c8e8" stroke-width="6.5" stroke-linejoin="round" stroke-linecap="round"/>
<path d="M937.8 562.2 C940.0 562.8 946.7 565.8 951.1 566.0 C955.5 566.2 962.2 563.8 964.4 563.3" fill="none" stroke="#b2c8e8" stroke-width="9" stroke-linejoin="round" stroke-linecap="round"/>
<path d="M417.4 467.1 C422.1 469.5 434.6 476.1 445.8 481.2 C457.0 486.3 472.8 491.6 484.4 498.0 C496.0 504.4 505.9 512.8 515.4 519.9 C524.9 527.0 532.2 534.0 541.2 540.5 C550.2 547.0 560.5 552.1 569.5 558.6 C578.5 565.1 587.6 573.2 595.3 579.2 C603.0 585.2 608.2 589.6 615.9 594.7 C623.6 599.9 637.4 607.5 641.7 610.1" fill="none" stroke="#b9cce6" stroke-width="3.6" stroke-linejoin="round" stroke-linecap="round"/>
<path d="M420.0 504.4 L505.1 527.7" fill="none" stroke="#d9dddb" stroke-width="0.8" stroke-linejoin="round" stroke-linecap="round"/>
<path d="M420.0 525.1 L474.1 548.3" fill="none" stroke="#d9dddb" stroke-width="0.8" stroke-linejoin="round" stroke-linecap="round"/>
<path d="M453.5 499.3 L435.5 610.1" fill="none" stroke="#d9dddb" stroke-width="0.8" stroke-linejoin="round" stroke-linecap="round"/>
<path d="M474.1 548.3 L471.6 610.1" fill="none" stroke="#d9dddb" stroke-width="0.8" stroke-linejoin="round" stroke-linecap="round"/>
<path d="M497.3 525.1 L505.1 610.1" fill="none" stroke="#d9dddb" stroke-width="0.8" stroke-linejoin="round" stroke-linecap="round"/>
<path d="M420.0 568.9 L450.9 561.2" fill="none" stroke="#d9dddb" stroke-width="0.8" stroke-linejoin="round" stroke-linecap="round"/>
<path d="M445.8 483.8 L505.1 517.3" fill="none" stroke="#d9dddb" stroke-width="0.8" stroke-linejoin="round" stroke-linecap="round"/>
<path d="M435.5 491.6 L471.6 509.6 L461.2 525.1" fill="none" stroke="#d9dddb" stroke-width="0.8" stroke-linejoin="round" stroke-linecap="round"/>
<path d="M1031.1 516.7 L1062.2 574.4" fill="none" stroke="#e4e6e0" stroke-width="0.8" stroke-linejoin="round" stroke-linecap="round"/>
<path d="M1024.4 523.3 L1008.9 574.4" fill="none" stroke="#e4e6e0" stroke-width="0.8" stroke-linejoin="round" stroke-linecap="round"/>
<path d="M1040.0 503.3 L1072.2 516.7" fill="none" stroke="#e4e6e0" stroke-width="0.8" stroke-linejoin="round" stroke-linecap="round"/>
<path d="M1008.9 547.8 L1040.0 543.3 L1072.2 554.4" fill="none" stroke="#e4e6e0" stroke-width="0.8" stroke-linejoin="round" stroke-linecap="round"/>
<path d="M713.3 298.9 C713.9 301.3 714.9 308.7 716.7 313.3 C718.6 317.9 721.2 323.4 724.4 326.7 C727.5 330.0 730.0 331.3 735.6 333.3 C741.2 335.3 751.1 338.1 757.8 338.9 C764.5 339.6 771.5 339.1 775.6 337.8 C779.7 336.5 780.4 334.1 782.2 331.1 C784.1 328.1 786.1 323.7 786.7 320.0 C787.3 316.3 784.1 312.0 785.6 308.9 C787.1 305.8 793.9 302.4 795.6 301.1" fill="none" stroke="#f8ecb8" stroke-width="1.6" stroke-linejoin="round" stroke-linecap="butt"/>
<path d="M757.8 338.9 C758.9 340.9 762.9 346.5 764.4 351.1 C765.9 355.7 767.1 361.1 766.7 366.7 C766.3 372.2 763.7 380.0 762.2 384.4 C760.7 388.8 757.8 390.3 757.8 393.3 C757.8 396.3 759.2 400.0 762.2 402.2 C765.2 404.4 771.5 403.0 775.6 406.7 C779.7 410.4 784.5 415.3 786.7 424.4 C788.9 433.5 788.5 455.0 788.9 461.1" fill="none" stroke="#f8e9b0" stroke-width="1.8" stroke-linejoin="round" stroke-linecap="butt"/>
<path d="M717.8 326.7 L721.1 355.6 L726.7 388.9" fill="none" stroke="#faf3ba" stroke-width="1" stroke-linejoin="round" stroke-linecap="butt"/>
<path d="M620.0 328.9 L646.7 326.7 L664.4 313.3 L686.7 308.9 L713.3 306.7" fill="none" stroke="#faf3ba" stroke-width="1" stroke-linejoin="round" stroke-linecap="butt"/>
<path d="M620.0 351.1 L642.2 344.4 L660.0 324.4" fill="none" stroke="#faf3ba" stroke-width="1" stroke-linejoin="round" stroke-linecap="butt"/>
<path d="M726.7 388.9 L757.8 384.4" fill="none" stroke="#faf3ba" stroke-width="1.2" stroke-linejoin="round" stroke-linecap="butt"/>
<path d="M731.1 380.0 L757.8 376.7" fill="none" stroke="#faf3ba" stroke-width="1" stroke-linejoin="round" stroke-linecap="butt"/>
<path d="M775.6 406.7 L802.2 422.2 L788.9 431.1" fill="none" stroke="#f8e9b0" stroke-width="1.4" stroke-linejoin="round" stroke-linecap="butt"/>
<path d="M762.2 402.2 L784.4 433.3" fill="none" stroke="#faf3ba" stroke-width="1.2" stroke-linejoin="round" stroke-linecap="butt"/>
<path d="M802.2 317.8 L820.0 315.6 L842.2 313.3 L861.1 306.7" fill="none" stroke="#faf3ba" stroke-width="1.2" stroke-linejoin="round" stroke-linecap="butt"/>
<path d="M804.4 337.8 L822.2 336.7 L861.1 333.3" fill="none" stroke="#faf3ba" stroke-width="1.2" stroke-linejoin="round" stroke-linecap="butt"/>
<path d="M797.8 366.7 L833.3 373.3" fill="none" stroke="#faf3ba" stroke-width="1" stroke-linejoin="round" stroke-linecap="butt"/>
<path d="M808.9 388.9 L833.3 388.9 L861.1 377.8" fill="none" stroke="#faf3ba" stroke-width="1.2" stroke-linejoin="round" stroke-linecap="butt"/>
<path d="M804.4 326.7 L806.7 351.1" fill="none" stroke="#faf3ba" stroke-width="1" stroke-linejoin="round" stroke-linecap="butt"/>
<path d="M793.3 340.0 L797.8 366.7 L808.9 388.9 L804.4 406.7" fill="none" stroke="#faf3ba" stroke-width="1" stroke-linejoin="round" stroke-linecap="butt"/>
<path d="M753.3 433.3 L861.1 434.4" fill="none" stroke="#f8ecb8" stroke-width="1.6" stroke-linejoin="round" stroke-linecap="butt"/>
<path d="M753.3 442.2 L861.1 444.4" fill="none" stroke="#faf3ba" stroke-width="1" stroke-linejoin="round" stroke-linecap="butt"/>
<path d="M753.3 433.3 L753.3 461.1" fill="none" stroke="#faf3ba" stroke-width="1" stroke-linejoin="round" stroke-linecap="butt"/>
<path d="M771.1 433.3 L773.3 461.1" fill="none" stroke="#faf3ba" stroke-width="1" stroke-linejoin="round" stroke-linecap="butt"/>
<path d="M833.3 388.9 L842.2 433.3 L844.4 461.1" fill="none" stroke="#faf3ba" stroke-width="1" stroke-linejoin="round" stroke-linecap="butt"/>
<path d="M642.2 442.2 L704.4 442.2 L708.9 461.1" fill="none" stroke="#faf3ba" stroke-width="1" stroke-linejoin="round" stroke-linecap="butt"/>
<path d="M640.0 446.7 L642.2 461.1" fill="none" stroke="#faf3ba" stroke-width="1" stroke-linejoin="round" stroke-linecap="butt"/>
<path d="M664.4 442.2 L666.7 461.1" fill="none" stroke="#faf3ba" stroke-width="1" stroke-linejoin="round" stroke-linecap="butt"/>
<path d="M686.7 442.2 L688.9 461.1" fill="none" stroke="#faf3ba" stroke-width="1" stroke-linejoin="round" stroke-linecap="butt"/>
<path d="M620.0 397.8 C623.0 398.9 632.2 402.5 637.8 404.4 C643.3 406.2 647.0 407.8 653.3 408.9 C659.6 410.0 668.9 411.9 675.6 411.1 C682.3 410.4 687.8 406.6 693.3 404.4 C698.8 402.2 703.3 399.3 708.9 397.8 C714.5 396.3 720.8 396.4 726.7 395.6 C732.6 394.9 739.2 394.4 744.4 393.3 C749.6 392.2 755.6 389.6 757.8 388.9" fill="none" stroke="#f4e0a0" stroke-width="2" stroke-linejoin="round" stroke-linecap="butt"/>
<path d="M840.0 328.9 L857.8 313.3 L853.3 300.0" fill="none" stroke="#faf3ba" stroke-width="1.1" stroke-linejoin="round" stroke-linecap="butt"/>
<path d="M840.0 344.4 L866.7 340.0 L895.6 337.8" fill="none" stroke="#faf3ba" stroke-width="1.1" stroke-linejoin="round" stroke-linecap="butt"/>
<path d="M862.2 322.2 L864.4 340.0 L884.4 366.7 L913.3 371.1 L913.3 384.4 L928.9 395.6" fill="none" stroke="#faf3ba" stroke-width="1.1" stroke-linejoin="round" stroke-linecap="butt"/>
<path d="M884.4 351.1 L886.7 366.7" fill="none" stroke="#faf3ba" stroke-width="1.1" stroke-linejoin="round" stroke-linecap="butt"/>
<path d="M895.6 337.8 L913.3 371.1" fill="none" stroke="#faf3ba" stroke-width="1.1" stroke-linejoin="round" stroke-linecap="butt"/>
<path d="M913.3 353.3 L928.9 351.1" fill="none" stroke="#faf3ba" stroke-width="1.1" stroke-linejoin="round" stroke-linecap="butt"/>
<path d="M873.3 331.1 L913.3 353.3" fill="none" stroke="#faf3ba" stroke-width="1.1" stroke-linejoin="round" stroke-linecap="butt"/>
<path d="M928.9 351.1 L924.4 373.3 L931.1 395.6" fill="none" stroke="#faf3ba" stroke-width="1.1" stroke-linejoin="round" stroke-linecap="butt"/>
<path d="M942.2 355.6 L928.9 388.9" fill="none" stroke="#faf3ba" stroke-width="1.1" stroke-linejoin="round" stroke-linecap="butt"/>
<path d="M951.1 357.8 L944.4 393.3" fill="none" stroke="#faf3ba" stroke-width="1.1" stroke-linejoin="round" stroke-linecap="butt"/>
<path d="M955.6 364.4 L995.6 375.6 L977.8 393.3" fill="none" stroke="#faf3ba" stroke-width="1.1" stroke-linejoin="round" stroke-linecap="butt"/>
<path d="M973.3 368.9 L964.4 388.9 L944.4 393.3" fill="none" stroke="#faf3ba" stroke-width="1.1" stroke-linejoin="round" stroke-linecap="butt"/>
<path d="M995.6 375.6 L1008.9 393.3" fill="none" stroke="#faf3ba" stroke-width="1.1" stroke-linejoin="round" stroke-linecap="butt"/>
<path d="M993.3 317.8 L995.6 360.0" fill="none" stroke="#faf3ba" stroke-width="1.1" stroke-linejoin="round" stroke-linecap="butt"/>
<path d="M1013.3 320.0 L1004.4 362.2" fill="none" stroke="#faf3ba" stroke-width="1.1" stroke-linejoin="round" stroke-linecap="butt"/>
<path d="M1048.9 326.7 L1046.7 366.7" fill="none" stroke="#faf3ba" stroke-width="1.1" stroke-linejoin="round" stroke-linecap="butt"/>
<path d="M1002.2 313.3 L1031.1 320.0 L1072.2 313.3" fill="none" stroke="#faf3ba" stroke-width="1.1" stroke-linejoin="round" stroke-linecap="butt"/>
<path d="M1031.1 353.3 L1033.3 366.7" fill="none" stroke="#faf3ba" stroke-width="1.1" stroke-linejoin="round" stroke-linecap="butt"/>
<path d="M1024.4 355.6 L1040.0 355.6" fill="none" stroke="#faf3ba" stroke-width="1.1" stroke-linejoin="round" stroke-linecap="butt"/>
<path d="M895.6 384.4 L897.8 406.7 L893.3 433.3 L840.0 435.6" fill="none" stroke="#faf3ba" stroke-width="1.1" stroke-linejoin="round" stroke-linecap="butt"/>
<path d="M840.0 404.4 L895.6 404.4" fill="none" stroke="#faf3ba" stroke-width="1.1" stroke-linejoin="round" stroke-linecap="butt"/>
<path d="M935.6 397.8 L937.8 428.9 L935.6 461.1" fill="none" stroke="#faf3ba" stroke-width="1.1" stroke-linejoin="round" stroke-linecap="butt"/>
<path d="M951.1 397.8 L955.6 424.4 L975.6 433.3 L977.8 461.1" fill="none" stroke="#faf3ba" stroke-width="1.1" stroke-linejoin="round" stroke-linecap="butt"/>
<path d="M975.6 413.3 L995.6 424.4 L1017.8 420.0 L1040.0 404.4 L1072.2 384.4" fill="none" stroke="#faf3ba" stroke-width="1.1" stroke-linejoin="round" stroke-linecap="butt"/>
<path d="M982.2 433.3 L984.4 453.3" fill="none" stroke="#faf3ba" stroke-width="1.1" stroke-linejoin="round" stroke-linecap="butt"/>
<path d="M995.6 446.7 L1072.2 448.9" fill="none" stroke="#faf3ba" stroke-width="1.1" stroke-linejoin="round" stroke-linecap="butt"/>
<path d="M1035.6 368.9 L1053.3 393.3 L1072.2 404.4" fill="none" stroke="#faf3ba" stroke-width="1.1" stroke-linejoin="round" stroke-linecap="butt"/>
<path d="M846.7 424.4 L848.9 451.1" fill="none" stroke="#faf3ba" stroke-width="1.1" stroke-linejoin="round" stroke-linecap="butt"/>
<path d="M868.9 420.0 L871.1 451.1" fill="none" stroke="#faf3ba" stroke-width="1.1" stroke-linejoin="round" stroke-linecap="butt"/>
<path d="M840.0 422.2 L895.6 420.0" fill="none" stroke="#faf3ba" stroke-width="1.1" stroke-linejoin="round" stroke-linecap="butt"/>
<path d="M626.2 468.9 L673.3 468.9 L673.3 481.1 L626.2 481.1" fill="none" stroke="#faf3ba" stroke-width="1.1" stroke-linejoin="round" stroke-linecap="butt"/>
<path d="M673.3 468.9 L686.7 463.3" fill="none" stroke="#faf3ba" stroke-width="1.1" stroke-linejoin="round" stroke-linecap="butt"/>
<path d="M626.2 501.1 L717.8 500.0" fill="none" stroke="#faf3ba" stroke-width="1.1" stroke-linejoin="round" stroke-linecap="butt"/>
<path d="M626.2 516.7 L715.6 515.6" fill="none" stroke="#faf3ba" stroke-width="1.1" stroke-linejoin="round" stroke-linecap="butt"/>
<path d="M626.2 556.7 L731.1 554.4" fill="none" stroke="#faf3ba" stroke-width="1.1" stroke-linejoin="round" stroke-linecap="butt"/>
<path d="M626.2 574.4 L713.3 570.0" fill="none" stroke="#faf3ba" stroke-width="1.1" stroke-linejoin="round" stroke-linecap="butt"/>
<path d="M653.3 481.1 L655.6 574.4" fill="none" stroke="#faf3ba" stroke-width="1.1" stroke-linejoin="round" stroke-linecap="butt"/>
<path d="M673.3 481.1 L686.7 516.7 L700.0 574.4" fill="none" stroke="#faf3ba" stroke-width="1.1" stroke-linejoin="round" stroke-linecap="butt"/>
<path d="M686.7 490.0 L720.0 523.3 L731.1 565.6" fill="none" stroke="#faf3ba" stroke-width="1.1" stroke-linejoin="round" stroke-linecap="butt"/>
<path d="M700.0 500.0 L704.4 540.0" fill="none" stroke="#faf3ba" stroke-width="1.1" stroke-linejoin="round" stroke-linecap="butt"/>
<path d="M715.6 500.0 L735.6 538.9" fill="none" stroke="#faf3ba" stroke-width="1.1" stroke-linejoin="round" stroke-linecap="butt"/>
<path d="M642.2 541.1 L644.4 583.3" fill="none" stroke="#faf3ba" stroke-width="1.1" stroke-linejoin="round" stroke-linecap="butt"/>
<path d="M664.4 541.1 L668.9 592.2" fill="none" stroke="#faf3ba" stroke-width="1.1" stroke-linejoin="round" stroke-linecap="butt"/>
<path d="M717.8 494.4 L753.3 490.0 L793.3 478.9" fill="none" stroke="#faf3ba" stroke-width="1.1" stroke-linejoin="round" stroke-linecap="butt"/>
<path d="M731.1 523.3 L775.6 516.7" fill="none" stroke="#faf3ba" stroke-width="1.1" stroke-linejoin="round" stroke-linecap="butt"/>
<path d="M735.6 538.9 L757.8 534.4 L784.4 538.9" fill="none" stroke="#faf3ba" stroke-width="1.1" stroke-linejoin="round" stroke-linecap="butt"/>
<path d="M744.4 478.9 L753.3 523.3" fill="none" stroke="#faf3ba" stroke-width="1.1" stroke-linejoin="round" stroke-linecap="butt"/>
<path d="M762.2 472.2 L775.6 516.7" fill="none" stroke="#faf3ba" stroke-width="1.1" stroke-linejoin="round" stroke-linecap="butt"/>
<path d="M775.6 463.3 L784.4 512.2" fill="none" stroke="#faf3ba" stroke-width="1.1" stroke-linejoin="round" stroke-linecap="butt"/>
<path d="M797.8 463.3 L861.1 461.1" fill="none" stroke="#faf3ba" stroke-width="1.1" stroke-linejoin="round" stroke-linecap="butt"/>
<path d="M800.0 478.9 L861.1 474.4" fill="none" stroke="#faf3ba" stroke-width="1.1" stroke-linejoin="round" stroke-linecap="butt"/>
<path d="M802.2 494.4 L861.1 490.0" fill="none" stroke="#faf3ba" stroke-width="1.1" stroke-linejoin="round" stroke-linecap="butt"/>
<path d="M804.4 516.7 L861.1 512.2" fill="none" stroke="#faf3ba" stroke-width="1.1" stroke-linejoin="round" stroke-linecap="butt"/>
<path d="M811.1 565.6 L842.2 561.1 L861.1 554.4" fill="none" stroke="#faf3ba" stroke-width="1.1" stroke-linejoin="round" stroke-linecap="butt"/>
<path d="M820.0 583.3 L842.2 574.4" fill="none" stroke="#faf3ba" stroke-width="1.1" stroke-linejoin="round" stroke-linecap="butt"/>
<path d="M666.7 603.8 L708.9 592.2 L744.4 581.1 L775.6 565.6" fill="none" stroke="#faf3ba" stroke-width="1.1" stroke-linejoin="round" stroke-linecap="butt"/>
<path d="M811.1 450.0 L815.6 494.4" fill="none" stroke="#faf3ba" stroke-width="1.1" stroke-linejoin="round" stroke-linecap="butt"/>
<path d="M842.2 450.0 L846.7 516.7 L855.6 547.8" fill="none" stroke="#faf3ba" stroke-width="1.1" stroke-linejoin="round" stroke-linecap="butt"/>
<path d="M731.1 554.4 L762.2 547.8 L784.4 538.9" fill="none" stroke="#faf3ba" stroke-width="1.1" stroke-linejoin="round" stroke-linecap="butt"/>
<path d="M626.2 541.1 L708.9 540.0 L784.4 538.9" fill="none" stroke="#f5e2a8" stroke-width="1.8" stroke-linejoin="round" stroke-linecap="butt"/>
<path d="M840.0 465.6 L873.3 463.3 L906.7 454.4 L928.9 450.0" fill="none" stroke="#faf3ba" stroke-width="1.1" stroke-linejoin="round" stroke-linecap="butt"/>
<path d="M840.0 481.1 L895.6 474.4 L955.6 470.0 L1008.9 467.8 L1072.2 456.7" fill="none" stroke="#faf3ba" stroke-width="1.1" stroke-linejoin="round" stroke-linecap="butt"/>
<path d="M840.0 501.1 L895.6 497.8 L928.9 494.4 L960.0 493.3" fill="none" stroke="#faf3ba" stroke-width="1.1" stroke-linejoin="round" stroke-linecap="butt"/>
<path d="M862.2 463.3 L868.9 501.1" fill="none" stroke="#faf3ba" stroke-width="1.1" stroke-linejoin="round" stroke-linecap="butt"/>
<path d="M891.1 456.7 L897.8 497.8" fill="none" stroke="#faf3ba" stroke-width="1.1" stroke-linejoin="round" stroke-linecap="butt"/>
<path d="M913.3 452.2 L916.7 496.7" fill="none" stroke="#faf3ba" stroke-width="1.1" stroke-linejoin="round" stroke-linecap="butt"/>
<path d="M931.1 450.0 L933.3 494.4" fill="none" stroke="#faf3ba" stroke-width="1.1" stroke-linejoin="round" stroke-linecap="butt"/>
<path d="M984.4 450.0 L985.6 478.9" fill="none" stroke="#faf3ba" stroke-width="1.1" stroke-linejoin="round" stroke-linecap="butt"/>
<path d="M955.6 470.0 L957.8 492.2" fill="none" stroke="#faf3ba" stroke-width="1.1" stroke-linejoin="round" stroke-linecap="butt"/>
<path d="M960.0 493.3 L977.8 501.1 L1008.9 505.6 L1035.6 494.4" fill="none" stroke="#faf3ba" stroke-width="1.1" stroke-linejoin="round" stroke-linecap="butt"/>
<path d="M840.0 514.4 L880.0 510.0 L928.9 497.8" fill="none" stroke="#faf3ba" stroke-width="1.1" stroke-linejoin="round" stroke-linecap="butt"/>
<path d="M995.6 543.3 L1017.8 574.4 L1026.7 610.0" fill="none" stroke="#faf3ba" stroke-width="1.1" stroke-linejoin="round" stroke-linecap="butt"/>
<path d="M955.6 494.4 L951.1 538.9 L937.8 583.3 L928.9 611.1" fill="none" stroke="#faf3ba" stroke-width="1.1" stroke-linejoin="round" stroke-linecap="butt"/>
<path d="M840.0 465.6 L873.3 463.3 L906.7 454.4 L928.9 450.0" fill="none" stroke="#f5e09a" stroke-width="1.8" stroke-linejoin="round" stroke-linecap="butt"/>
<path d="M840.0 481.1 C849.3 480.0 876.3 476.2 895.6 474.4 C914.9 472.5 936.7 471.1 955.6 470.0 C974.5 468.9 994.8 468.9 1008.9 467.8 C1023.0 466.7 1029.5 465.5 1040.0 463.3 C1050.5 461.1 1066.8 455.9 1072.2 454.4" fill="none" stroke="#f5e09a" stroke-width="1.8" stroke-linejoin="round" stroke-linecap="butt"/>
<path d="M585.0 306.1 L574.7 321.6" fill="none" stroke="#faf3ba" stroke-width="1" stroke-linejoin="round" stroke-linecap="butt"/>
<path d="M750.0 335.7 L713.9 331.9 L703.6 308.7 L698.4 277.7" fill="none" stroke="#faf3ba" stroke-width="1" stroke-linejoin="round" stroke-linecap="butt"/>
<path d="M713.9 303.5 L667.5 316.4 L652.0 329.3 L646.9 347.3" fill="none" stroke="#faf3ba" stroke-width="1" stroke-linejoin="round" stroke-linecap="butt"/>
<path d="M621.1 360.2 L626.2 404.1" fill="none" stroke="#faf3ba" stroke-width="1" stroke-linejoin="round" stroke-linecap="butt"/>
<path d="M667.5 300.9 L662.3 321.6" fill="none" stroke="#faf3ba" stroke-width="1" stroke-linejoin="round" stroke-linecap="butt"/>
<path d="M644.3 447.9 L644.3 409.2" fill="none" stroke="#faf3ba" stroke-width="1" stroke-linejoin="round" stroke-linecap="butt"/>
<path d="M677.8 413.1 L680.4 450.5" fill="none" stroke="#faf3ba" stroke-width="1" stroke-linejoin="round" stroke-linecap="butt"/>
<path d="M577.3 468.4 L626.2 468.9" fill="none" stroke="#f6f1cf" stroke-width="1" stroke-linejoin="round" stroke-linecap="butt"/>
<path d="M577.3 468.4 L577.8 483.8 L626.2 483.8" fill="none" stroke="#f6f1cf" stroke-width="1" stroke-linejoin="round" stroke-linecap="butt"/>
<path d="M600.5 541.8 L626.2 541.8" fill="none" stroke="#f6f1cf" stroke-width="1" stroke-linejoin="round" stroke-linecap="butt"/>
<path d="M585.0 553.4 L600.5 541.8" fill="none" stroke="#f6f1cf" stroke-width="1" stroke-linejoin="round" stroke-linecap="butt"/>
<path d="M574.7 563.7 L585.0 553.4 L626.2 517.3" fill="none" stroke="#f6f1cf" stroke-width="1" stroke-linejoin="round" stroke-linecap="butt"/>
<path d="M554.1 473.5 L556.6 517.3 L554.1 538.0" fill="none" stroke="#f6f1cf" stroke-width="1" stroke-linejoin="round" stroke-linecap="butt"/>
<path d="M530.9 455.5 L533.4 504.4" fill="none" stroke="#f6f1cf" stroke-width="1" stroke-linejoin="round" stroke-linecap="butt"/>
<path d="M505.1 450.3 L548.9 491.6 L585.0 525.1 L610.8 548.3 L623.7 574.1" fill="none" stroke="#f6f1cf" stroke-width="1" stroke-linejoin="round" stroke-linecap="butt"/>
<path d="M564.4 517.3 L600.5 504.4 L626.2 504.4" fill="none" stroke="#f6f1cf" stroke-width="1" stroke-linejoin="round" stroke-linecap="butt"/>
<path d="M597.9 491.6 L600.5 525.1" fill="none" stroke="#f6f1cf" stroke-width="1" stroke-linejoin="round" stroke-linecap="butt"/>
<path d="M610.8 574.1 L626.2 574.1" fill="none" stroke="#f6f1cf" stroke-width="1" stroke-linejoin="round" stroke-linecap="butt"/>
<path d="M497.3 447.7 L528.3 445.2 L554.1 450.3" fill="none" stroke="#f6f1cf" stroke-width="1" stroke-linejoin="round" stroke-linecap="butt"/>
<path d="M471.6 456.9 C474.2 455.4 482.1 450.7 487.0 447.9 C491.9 445.1 494.3 441.8 501.2 440.1 C508.1 438.4 508.4 437.9 528.3 437.6 C548.2 437.3 600.0 438.3 620.6 438.3 C641.2 438.3 640.1 440.1 652.0 437.6 C663.9 435.1 685.3 425.8 692.0 423.4" fill="none" stroke="#cbcbd0" stroke-width="0.8" stroke-linejoin="round" stroke-linecap="round"/>
<path d="M691.1 423.3 C694.1 421.3 703.4 414.2 708.9 411.1 C714.4 408.0 720.7 403.6 724.4 404.4 C728.1 405.1 730.4 411.2 731.1 415.6 C731.9 420.1 732.1 428.0 728.9 431.1 C725.6 434.2 715.7 432.1 711.6 434.0 C707.5 435.9 704.9 437.7 704.4 442.2 C703.9 446.7 708.1 458.0 708.9 461.1" fill="none" stroke="#cbcbd0" stroke-width="0.8" stroke-linejoin="round" stroke-linecap="round"/>
<path d="M711.6 434.0 C718.5 435.4 739.1 439.8 753.3 442.2 C767.5 444.6 786.6 447.2 796.7 448.4 C806.8 449.6 804.8 449.2 814.0 449.6 C823.2 450.1 844.4 450.8 852.2 451.1 C860.1 451.4 859.6 451.5 861.1 451.6" fill="none" stroke="#cbcbd0" stroke-width="0.8" stroke-linejoin="round" stroke-linecap="round"/>
<path d="M840.0 451.1 C841.9 451.1 844.0 451.6 851.6 451.1 C859.2 450.7 876.4 450.6 885.6 448.4 C894.8 446.2 901.3 442.5 906.7 437.8 C912.1 433.1 914.8 425.6 917.8 420.0 C920.8 414.4 921.4 408.1 924.4 404.4 C927.4 400.7 931.1 398.9 935.6 397.8 C940.1 396.7 946.9 396.7 951.1 397.8 C955.4 398.9 957.0 401.8 961.1 404.4 C965.2 407.0 973.6 408.5 975.6 413.3 C977.6 418.1 974.5 427.6 973.3 433.3 C972.1 439.1 969.9 443.2 968.4 447.8 C966.9 452.4 965.1 458.9 964.4 461.1" fill="none" stroke="#cbcbd0" stroke-width="0.8" stroke-linejoin="round" stroke-linecap="round"/>
<path d="M968.4 448.9 C967.3 456.1 964.7 477.2 961.8 492.2 C958.9 507.2 955.1 523.7 951.1 538.9 C947.1 554.1 941.1 571.3 937.8 583.3 C934.5 595.3 932.2 606.5 931.1 611.1" fill="none" stroke="#cbcbd0" stroke-width="0.8" stroke-linejoin="round" stroke-linecap="round"/>
<path d="M961.8 492.2 C964.5 493.9 969.9 500.2 977.8 502.2 C985.6 504.2 999.0 505.8 1008.9 504.4 C1018.8 503.0 1032.6 495.7 1037.3 494.0" fill="none" stroke="#cbcbd0" stroke-width="0.8" stroke-linejoin="round" stroke-linecap="round"/>
<path d="M501.2 440.8 C496.5 444.6 478.7 458.6 472.8 463.7 C466.9 468.8 470.4 471.6 465.9 471.5 C461.4 471.4 453.4 465.9 445.8 463.2 C438.2 460.5 424.3 456.8 420.0 455.5" fill="none" stroke="#cbcbd0" stroke-width="0.8" stroke-linejoin="round" stroke-linecap="round"/>
<path d="M472.8 463.7 L494.0 481.8 L526.5 510.1 L559.2 539.8 L585.0 561.2 L610.3 577.4 L626.2 594.7 L666.7 603.7" fill="none" stroke="#cbcbd0" stroke-width="0.8" stroke-linejoin="round" stroke-linecap="round"/>
<path d="M781.1 527.8 C776.5 525.9 760.9 524.9 753.3 516.7 C745.7 508.6 738.5 485.2 735.6 478.9" fill="none" stroke="#cbcbd0" stroke-width="0.8" stroke-linejoin="round" stroke-linecap="round"/>
<path d="M781.1 527.8 C781.6 530.4 784.6 537.8 784.4 543.3 C784.2 548.8 776.9 558.2 780.0 561.1 C783.1 564.0 796.2 558.5 802.9 560.7 C809.6 562.9 817.1 572.1 820.0 574.4" fill="none" stroke="#cbcbd0" stroke-width="0.8" stroke-linejoin="round" stroke-linecap="round"/>
<path d="M780.0 561.1 C775.5 564.8 765.1 576.6 753.3 583.3 C741.4 590.0 723.3 597.7 708.9 601.1 C694.5 604.5 673.7 603.3 666.7 603.8" fill="none" stroke="#cbcbd0" stroke-width="0.8" stroke-linejoin="round" stroke-linecap="round"/>
<path d="M420.0 376.7 C423.7 375.8 434.8 372.8 442.2 371.1 C449.6 369.4 457.0 367.1 464.4 366.7 C471.8 366.3 479.3 367.6 486.7 368.9 C494.1 370.2 502.2 372.0 508.9 374.4 C515.6 376.8 521.5 381.2 526.7 383.3 C531.9 385.4 531.9 385.9 540.0 386.7 C548.1 387.4 566.0 386.7 575.6 387.8 C585.2 388.9 590.4 391.3 597.8 393.3 C605.2 395.3 613.1 398.1 620.0 400.0 C626.9 401.9 635.8 403.7 638.9 404.4" fill="none" stroke="#edcd7a" stroke-width="2.5" stroke-linejoin="round" stroke-linecap="round"/>
<path d="M420.0 360.0 C424.4 360.2 439.3 360.0 446.7 361.1 C454.1 362.2 461.4 365.8 464.4 366.7" fill="none" stroke="#f4dc90" stroke-width="1.8" stroke-linejoin="round" stroke-linecap="round"/>
<path d="M455.6 295.6 C453.4 303.0 445.9 330.8 442.2 340.0 C438.5 349.2 437.0 347.8 433.3 351.1 C429.6 354.4 422.2 358.5 420.0 360.0" fill="none" stroke="#f4dc90" stroke-width="1.6" stroke-linejoin="round" stroke-linecap="round"/>
<path d="M638.9 404.4 C637.2 406.6 631.1 413.0 628.9 417.8 C626.7 422.6 626.4 426.1 625.8 433.3 C625.2 440.5 625.4 456.5 625.3 461.1" fill="none" stroke="#edcd7a" stroke-width="2.6" stroke-linejoin="round" stroke-linecap="round"/>
<path d="M625.4 448.9 L625.4 583.3" fill="none" stroke="#edcd7a" stroke-width="2.6" stroke-linejoin="round" stroke-linecap="round"/>
<path d="M625.4 583.3 C625.6 584.8 625.4 589.5 626.7 592.2 C628.0 594.9 630.0 597.4 633.3 599.3 C636.6 601.1 641.1 602.5 646.7 603.3 C652.3 604.0 663.4 603.7 666.7 603.8" fill="none" stroke="#edcd7a" stroke-width="2.6" stroke-linejoin="round" stroke-linecap="round"/>
<path d="M638.9 404.4 L661.1 411.1" fill="none" stroke="#f4e0a0" stroke-width="2" stroke-linejoin="round" stroke-linecap="round"/>
<path d="M823.5 277.7 C823.7 282.9 822.9 291.9 824.8 308.7 C826.7 325.5 834.7 362.4 835.1 378.3 C835.5 394.2 830.3 392.2 827.3 404.1 C824.3 416.0 818.7 442.3 817.0 449.9" fill="none" stroke="#f7e8ac" stroke-width="2" stroke-linejoin="round" stroke-linecap="round"/>
<path d="M835.6 304.4 C839.3 305.9 847.8 307.7 857.8 313.3 C867.8 318.9 883.8 331.5 895.6 337.8 C907.5 344.1 915.2 347.4 928.9 351.1 C942.6 354.8 960.8 357.4 977.8 360.0 C994.8 362.6 1021.5 365.2 1031.1 366.7 C1040.7 368.2 1034.8 368.5 1035.6 368.9" fill="none" stroke="#f5e3a2" stroke-width="2.2" stroke-linejoin="round" stroke-linecap="round"/>
<path d="M1072.2 340.0 C1066.1 344.8 1046.1 360.0 1035.6 368.9 C1025.0 377.8 1019.3 384.1 1008.9 393.3 C998.5 402.6 985.1 415.5 973.3 424.4 C961.4 433.3 945.9 440.6 937.8 446.7 C929.6 452.8 926.6 458.7 924.4 461.1" fill="none" stroke="#f5e3a2" stroke-width="2.2" stroke-linejoin="round" stroke-linecap="round"/>
<path d="M838.9 451.6 C846.7 451.1 874.3 450.7 885.6 448.4 C896.9 446.1 901.3 442.5 906.7 437.8 C912.1 433.1 914.8 425.6 917.8 420.0 C920.8 414.4 921.4 408.1 924.4 404.4 C927.4 400.7 931.1 398.9 935.6 397.8 C940.1 396.7 946.3 396.7 951.1 397.8 C955.9 398.9 960.3 401.8 964.4 404.4 C968.5 407.0 973.7 411.8 975.6 413.3" fill="none" stroke="#f1dcae" stroke-width="1.8" stroke-linejoin="round" stroke-linecap="round"/>
<path d="M837.7 298.4 L858.3 313.8" fill="none" stroke="#f7e8ac" stroke-width="1.8" stroke-linejoin="round" stroke-linecap="round"/>
<path d="M783.5 316.4 C789.1 314.2 808.0 306.5 817.0 303.5 C826.0 300.5 834.2 299.2 837.7 298.4" fill="none" stroke="#f6e39e" stroke-width="1.6" stroke-linejoin="round" stroke-linecap="round"/>
<path d="M750.0 337.0 C752.6 337.9 762.5 335.3 765.5 342.2 C768.5 349.1 769.3 368.9 768.0 378.3 C766.7 387.8 759.4 395.5 757.7 398.9" fill="none" stroke="#f6e39e" stroke-width="1.6" stroke-linejoin="round" stroke-linecap="round"/>
<path d="M793.3 448.9 C794.0 456.5 795.9 483.1 797.8 494.4 C799.6 505.7 802.5 508.6 804.4 516.7 C806.2 524.9 807.8 535.1 808.9 543.3 C810.0 551.4 809.2 558.9 811.1 565.6 C813.0 572.3 816.3 575.7 820.0 583.3 C823.7 590.9 831.1 606.5 833.3 611.1" fill="none" stroke="#f6e5a8" stroke-width="2" stroke-linejoin="round" stroke-linecap="round"/>
<path d="M820.0 448.9 C820.7 453.5 822.2 465.4 824.4 476.7 C826.6 488.0 830.3 504.9 833.3 516.7 C836.3 528.6 839.6 538.2 842.2 547.8 C844.8 557.4 847.4 563.8 848.9 574.4 C850.4 585.0 850.7 605.0 851.1 611.1" fill="none" stroke="#f6e5a8" stroke-width="2" stroke-linejoin="round" stroke-linecap="round"/>
<path d="M750.0 447.2 C758.6 447.6 775.8 449.2 801.6 449.8 C827.4 450.4 887.5 450.6 904.7 450.8" fill="none" stroke="#f4de98" stroke-width="1.8" stroke-linejoin="round" stroke-linecap="round"/>
<path d="M626.2 468.4 L664.9 468.4 L703.6 450.3 L724.2 440.0" fill="none" stroke="#f5e09a" stroke-width="1.6" stroke-linejoin="round" stroke-linecap="round"/>
<path d="M667.5 606.5 C671.8 604.5 683.8 600.1 693.3 594.7 C702.8 589.3 714.8 579.3 724.2 574.1 C733.7 568.9 745.7 565.4 750.0 563.7" fill="none" stroke="#f6e6a6" stroke-width="1.4" stroke-linejoin="round" stroke-linecap="round"/>
<path d="M1072.2 485.6 C1066.8 488.6 1050.5 497.0 1040.0 503.3 C1029.5 509.6 1016.3 516.6 1008.9 523.3 C1001.5 530.0 997.8 540.0 995.6 543.3" fill="none" stroke="#f6e6a6" stroke-width="1.4" stroke-linejoin="round" stroke-linecap="round"/>
<circle cx="501.2" cy="440.5" r="2.5" fill="#fff" stroke="#4a3db0" stroke-width="1.5"/>
<circle cx="620.6" cy="438.3" r="2.5" fill="#fff" stroke="#4a3db0" stroke-width="1.5"/>
<circle cx="691.5" cy="423.4" r="2.5" fill="#fff" stroke="#4a3db0" stroke-width="1.5"/>
<circle cx="711.8" cy="433.9" r="2.5" fill="#fff" stroke="#4a3db0" stroke-width="1.5"/>
<circle cx="796.6" cy="448.5" r="2.5" fill="#fff" stroke="#4a3db0" stroke-width="1.5"/>
<circle cx="814" cy="449.6" r="2.5" fill="#fff" stroke="#4a3db0" stroke-width="1.5"/>
<circle cx="852" cy="450.8" r="2.5" fill="#fff" stroke="#4a3db0" stroke-width="1.5"/>
<circle cx="885.8" cy="448.3" r="2.5" fill="#fff" stroke="#4a3db0" stroke-width="1.5"/>
<circle cx="917.7" cy="419.8" r="2.5" fill="#fff" stroke="#4a3db0" stroke-width="1.5"/>
<circle cx="961.2" cy="404.3" r="2.5" fill="#fff" stroke="#4a3db0" stroke-width="1.5"/>
<circle cx="968.5" cy="447.6" r="2.5" fill="#fff" stroke="#4a3db0" stroke-width="1.5"/>
<circle cx="962" cy="492.3" r="2.5" fill="#fff" stroke="#4a3db0" stroke-width="1.5"/>
<circle cx="1037.4" cy="493.8" r="2.5" fill="#fff" stroke="#4a3db0" stroke-width="1.5"/>
<circle cx="781" cy="527.7" r="2.5" fill="#fff" stroke="#4a3db0" stroke-width="1.5"/>
<circle cx="780" cy="561" r="2.5" fill="#fff" stroke="#4a3db0" stroke-width="1.5"/>
<circle cx="803" cy="560.8" r="2.5" fill="#fff" stroke="#4a3db0" stroke-width="1.5"/>
<circle cx="472.8" cy="463.7" r="2.5" fill="#fff" stroke="#4a3db0" stroke-width="1.5"/>
<circle cx="465.9" cy="471.5" r="2.5" fill="#fff" stroke="#4a3db0" stroke-width="1.5"/>
<circle cx="494" cy="481.8" r="2.5" fill="#fff" stroke="#4a3db0" stroke-width="1.5"/>
<circle cx="526.5" cy="510" r="2.5" fill="#fff" stroke="#4a3db0" stroke-width="1.5"/>
<circle cx="559.2" cy="539.8" r="2.5" fill="#fff" stroke="#4a3db0" stroke-width="1.5"/>
<circle cx="666.7" cy="603.7" r="2.5" fill="#fff" stroke="#4a3db0" stroke-width="1.5"/>
<path d="M421.5 451.3a2.700 2.700 0 0 0 0 -5.400" fill="none" stroke="#4a3db0" stroke-width="1.500"/>
<rect x="606.3" y="573.5" width="8" height="8" rx="1" fill="#4b3cb4"/><circle cx="609.8" cy="577" r="1.7" fill="none" stroke="#fff" stroke-width=".9"/><path d="M611 578.3l1.8 1.8" stroke="#fff" stroke-width=".9"/>
<path d="M733.5 594.5h6l1.5 3-2 5-3-1.5-2 1z" fill="#fff" stroke="#333" stroke-width=".7"/>
<rect x="843.5" y="581.8" width="18.5" height="8.4" rx="2" fill="#5b6fc4"/><text x="852.8" y="588.5" font-size="6.3" font-weight="bold" fill="#fff" text-anchor="middle">А-135</text>
<text x="739" y="350.5" font-size="7.2" font-weight="bold" fill="#a39cac" text-anchor="middle" stroke="#fbfcf0" stroke-width="1.4" paint-order="stroke" stroke-linejoin="round">ОКТЯБРЬСКИЙ</text>
<text x="739.5" y="357.9" font-size="7.2" font-weight="bold" fill="#a39cac" text-anchor="middle" stroke="#fbfcf0" stroke-width="1.4" paint-order="stroke" stroke-linejoin="round">РАЙОН</text>
<text x="814" y="321" font-size="7.2" font-weight="bold" fill="#a39cac" text-anchor="middle" stroke="#fbfcf0" stroke-width="1.4" paint-order="stroke" stroke-linejoin="round">ВОРОШИЛОВСКИЙ</text>
<text x="814" y="328.6" font-size="7.2" font-weight="bold" fill="#a39cac" text-anchor="middle" stroke="#fbfcf0" stroke-width="1.4" paint-order="stroke" stroke-linejoin="round">РАЙОН</text>
<text x="948" y="337.8" font-size="7.2" font-weight="bold" fill="#a39cac" text-anchor="middle" stroke="#fbfcf0" stroke-width="1.4" paint-order="stroke" stroke-linejoin="round">ПЕРВОМАЙСКИЙ</text>
<text x="948" y="345.8" font-size="7.2" font-weight="bold" fill="#a39cac" text-anchor="middle" stroke="#fbfcf0" stroke-width="1.4" paint-order="stroke" stroke-linejoin="round">РАЙОН</text>
<text x="631.4" y="476.6" font-size="7.2" font-weight="bold" fill="#a39cac" text-anchor="middle" stroke="#fbfcf0" stroke-width="1.4" paint-order="stroke" stroke-linejoin="round">СОВЕТСКИЙ РАЙОН</text>
<text x="744" y="543.5" font-size="7.2" font-weight="bold" fill="#a39cac" text-anchor="middle" stroke="#fbfcf0" stroke-width="1.4" paint-order="stroke" stroke-linejoin="round">ЖЕЛЕЗНОДОРОЖНЫЙ</text>
<text x="744" y="551.6" font-size="7.2" font-weight="bold" fill="#a39cac" text-anchor="middle" stroke="#fbfcf0" stroke-width="1.4" paint-order="stroke" stroke-linejoin="round">РАЙОН</text>
<text x="848" y="498.6" font-size="7.2" font-weight="bold" fill="#a39cac" text-anchor="middle" stroke="#fbfcf0" stroke-width="1.4" paint-order="stroke" stroke-linejoin="round">КИРОВСКИЙ РАЙОН</text>
<text x="941.5" y="480.6" font-size="7.2" font-weight="bold" fill="#a39cac" text-anchor="middle" stroke="#fbfcf0" stroke-width="1.4" paint-order="stroke" stroke-linejoin="round">ПРОЛЕТАРСКИЙ</text>
<text x="941.5" y="488.6" font-size="7.2" font-weight="bold" fill="#a39cac" text-anchor="middle" stroke="#fbfcf0" stroke-width="1.4" paint-order="stroke" stroke-linejoin="round">РАЙОН</text>
<text x="639" y="339" font-size="8" font-weight="normal" fill="#555" text-anchor="middle" stroke="#fbfcf0" stroke-width="1.4" paint-order="stroke" stroke-linejoin="round">Ленинаван</text>
<text x="1037.5" y="321.5" font-size="8" font-weight="normal" fill="#555" text-anchor="middle" stroke="#fbfcf0" stroke-width="1.4" paint-order="stroke" stroke-linejoin="round">Янтарный</text>
<text x="1001" y="280.5" font-size="8" font-weight="normal" fill="#555" text-anchor="middle" stroke="#fbfcf0" stroke-width="1.4" paint-order="stroke" stroke-linejoin="round">Камыше</text>
<text x="422.3" y="443" font-size="8" font-weight="normal" fill="#555" text-anchor="start" stroke="#fbfcf0" stroke-width="1.4" paint-order="stroke" stroke-linejoin="round">нин</text>
<text x="909.8" y="346" font-size="7.5" font-weight="normal" fill="#444" text-anchor="middle" transform="rotate(24 909.8 346)" stroke="#fbfcf0" stroke-width="1.4" paint-order="stroke" stroke-linejoin="round">Вятская ул.</text>
<text x="805.4" y="373" font-size="7" font-weight="normal" fill="#444" text-anchor="middle" transform="rotate(70 805.4 373)" stroke="#fbfcf0" stroke-width="1.4" paint-order="stroke" stroke-linejoin="round">Бодрая ул.</text>
<text x="974.3" y="422" font-size="7.5" font-weight="normal" fill="#444" text-anchor="middle" transform="rotate(-38 974.3 422)" stroke="#fbfcf0" stroke-width="1.4" paint-order="stroke" stroke-linejoin="round">просп. Шолохова</text>
<text x="956.5" y="314" font-size="7" font-weight="normal" fill="#444" text-anchor="middle" transform="rotate(-90 956.5 314)" stroke="#fbfcf0" stroke-width="1.4" paint-order="stroke" stroke-linejoin="round">Орская</text>
<text x="722.5" y="371" font-size="7" font-weight="normal" fill="#444" text-anchor="middle" transform="rotate(86 722.5 371)" stroke="#fbfcf0" stroke-width="1.4" paint-order="stroke" stroke-linejoin="round">ул. Оганова</text>
<text x="760" y="464.5" font-size="7" font-weight="normal" fill="#444" text-anchor="middle" transform="rotate(12 760 464.5)" stroke="#fbfcf0" stroke-width="1.4" paint-order="stroke" stroke-linejoin="round">ул. Мечникова</text>
<text x="773" y="490" font-size="7" font-weight="normal" fill="#444" text-anchor="middle" transform="rotate(-22 773 490)" stroke="#fbfcf0" stroke-width="1.4" paint-order="stroke" stroke-linejoin="round">ул. Текучёва</text>
<text x="695.8" y="507" font-size="7" font-weight="normal" fill="#444" text-anchor="middle" transform="rotate(52 695.8 507)" stroke="#fbfcf0" stroke-width="1.4" paint-order="stroke" stroke-linejoin="round">ул. Мадояна</text>
<text x="733" y="504" font-size="7.5" font-weight="normal" fill="#5a78c0" text-anchor="middle" transform="rotate(32 733 504)" stroke="#fbfcf0" stroke-width="1.4" paint-order="stroke" stroke-linejoin="round">р. Темерник</text>
<text x="694.6" y="595" font-size="7" font-weight="normal" fill="#444" text-anchor="middle" transform="rotate(-20 694.6 595)" stroke="#fbfcf0" stroke-width="1.4" paint-order="stroke" stroke-linejoin="round">Портовая ул.</text>
<text x="823.5" y="538" font-size="7" font-weight="normal" fill="#444" text-anchor="middle" transform="rotate(-16 823.5 538)" stroke="#fbfcf0" stroke-width="1.4" paint-order="stroke" stroke-linejoin="round">Береговая ул.</text>
<text x="748" y="607.5" font-size="7" font-weight="normal" fill="#444" text-anchor="middle" transform="rotate(-16 748 607.5)" stroke="#fbfcf0" stroke-width="1.4" paint-order="stroke" stroke-linejoin="round">вая ул.</text>
<text x="831.2" y="510.7" font-size="11.6" font-weight="normal" fill="#111" text-anchor="middle" stroke="#fbfcf0" stroke-width="1.4" paint-order="stroke" stroke-linejoin="round">Ростов-на-Дону</text>
<path d="M633 487l7.5 -4.5 -9.5 13z" fill="#8a93a8" opacity=".4"/><path d="M630.6 496.2 L627.6 486 L637 484 Z" fill="#3f4ee0"/><circle cx="631.9" cy="480.6" r="6.2" fill="#fff" stroke="#3f4ee0" stroke-width="2"/>
</svg><style>
.mb{position:absolute;background:#fff;border-radius:2px;box-shadow:0 1px 2px rgba(0,0,0,.18),0 0 0 .5px rgba(0,0,0,.06);font:9px/18px "Liberation Sans",sans-serif;color:#111;white-space:nowrap}
</style>
<div class="mb" style="left:7px;top:7px;width:18px;height:18px"></div>
<div class="mb" style="left:32px;top:7px;width:72px;height:18px;padding-left:20px">Маршруты</div>
<div class="mb" style="left:111px;top:7px;width:168px;height:18px;padding-left:7px;color:#999;border-radius:2px 0 0 2px">Адрес или объект</div>
<div class="mb" style="left:278px;top:6px;width:43px;height:20px;background:#f4e522;text-align:center;line-height:20px;border-radius:2px;box-shadow:none">Найти</div>
<div class="mb" style="left:495px;top:7px;width:59px;height:18px;padding-left:20.5px">Пробки</div>
<div class="mb" style="left:561px;top:7px;width:57px;height:18px;padding-left:20px">Слои</div>
<div class="mb" style="left:626px;top:7px;width:18px;height:18px"></div>
<div class="mb" style="left:7px;top:72px;width:18px;height:18px"></div>
<div class="mb" style="left:7px;top:191px;width:18px;height:18px"></div>
<div class="abs" style="left:13.5px;top:90px;width:5px;height:101px;background:#fff;box-shadow:0 0 0 .5px rgba(0,0,0,.12)"></div>
<div class="abs" style="left:15.5px;top:90px;width:1px;height:100px;background:#ccc"></div>
<div class="mb" style="left:6.5px;top:123px;width:19px;height:11px;opacity:.92"></div>
<div class="mb" style="left:626px;top:294px;width:18px;height:19px"></div>
<svg width="650" height="332" viewBox="422 277 650 332" style="position:absolute;left:0;top:0;font-family:'Liberation Sans',sans-serif">
<!-- geoloc arrow -->
<path d="M433.2 292.2 L443.6 287 L439.4 298.4 L438.3 293.4 Z" fill="#222"/>
<!-- routes icon -->
<path d="M459.8 289.2h5.2a1.8 1.8 0 0 1 0 3.6h-3.4a1.8 1.8 0 0 0 0 3.6h4.4" fill="none" stroke="#333" stroke-width="1.3"/><circle cx="468.2" cy="296.5" r=".9" fill="#333"/>
<!-- traffic icon -->
<circle cx="926.3" cy="292.6" r="4.4" fill="#8c8888"/><path d="M922.4 290.8a4.4 4.4 0 0 1 5.6-2.3 4.6 4.6 0 0 0-3 5.9 4.4 4.4 0 0 1-2.6-3.6z" fill="#c9c6c6"/>
<!-- layers icon -->
<g fill="none" stroke="#333" stroke-width="1" transform="translate(1.5 0)"><path d="M986.5 290.2l5.3-2.4 5.3 2.4-5.3 2.4z"/><path d="M986.5 292.6l5.3 2.4 5.3-2.4"/><path d="M986.5 295l5.3 2.4 5.3-2.4"/></g>
<path d="M1028.3 291.2l3 3 3-3" fill="none" stroke="#333" stroke-width="1"/>
<!-- fullscreen -->
<g transform="translate(.8 0)"><path d="M1053.2 296.2l6.2-6.2" stroke="#333" stroke-width="1.2"/><path d="M1056.4 289.2h3.8v3.8z M1052.4 293.2v3.8h3.8z" fill="#333"/></g>
<!-- zoom plus/minus -->
<path d="M433.6 358.2h8.6M437.9 353.9v8.6" stroke="#333" stroke-width="1.9"/>
<path d="M433.8 477.4h8.200" stroke="#333" stroke-width="1.900"/>
<path d="M434.500 405.600h7" stroke="#c4c4c4" stroke-width="2.500" stroke-dasharray=".7 1.100"/>
<!-- ruler -->
<rect x="1051.5" y="578.3" width="10.5" height="4.6" fill="none" stroke="#555" stroke-width=".8"/><path d="M1053.5 578.5v2.2M1055.5 578.5v2.2M1057.5 578.5v2.2M1059.5 578.5v2.2" stroke="#555" stroke-width=".7"/>
<!-- scale -->
<path d="M988.5 578.5v5M988.5 581h15M1026 581h15.5M1041.5 578.5v5" stroke="#888" stroke-width="1" fill="none"/>
<text x="1014.5" y="584" font-size="8" fill="#222" text-anchor="middle" stroke="#fbf9e8" stroke-width="1.5" paint-order="stroke">2 км</text>
<!-- copyrights -->
<rect x="900" y="593.5" width="137" height="10" fill="#fff" opacity=".75"/>
<text x="904" y="601.4" font-size="8.25" fill="#222">© Яндекс <tspan text-decoration="underline">Условия использования</tspan></text>
<text x="1040.5" y="604" font-size="12.5" fill="#222" textLength="28.5" lengthAdjust="spacingAndGlyphs"><tspan fill="#e52620">Я</tspan>ндекс</text>
</svg>
</div>
<div id="form" class="abs"></div>
<div id="formh" class="t">Задать вопрос</div>
<div id="call" class="abs"></div>
<svg class="abs" style="left:0;top:0" width="1272" height="684" viewBox="0 0 1272 684">
<!-- tooth logo -->
<path d="M294 75.5c-.6-3.2 1.2-5.8 4.2-5.8 1.8 0 2.6 1 3.9 1s2.300-1 4.100-1c3 0 4.800 2.600 4.200 5.800-.4 2.200-1 3.800-1.200 6.200-.3 3.600.2 7.600-1.300 11.300-.5 1.200-1.700 1.100-2-.2-.8-3.800-.2-8.200-1.400-11.400-.5-1.300-1.500-1.800-2.400-1.800s-1.900.5-2.400 1.800c-1.200 3.200-.6 7.600-1.400 11.400-.3 1.300-1.500 1.400-2 .2-1.500-3.700-1-7.700-1.300-11.300-.2-2.400-.8-4-1-6.200z" fill="#0f6f7e"/>
<g stroke="#c9f3f6" stroke-width=".7" stroke-linecap="round" fill="none"><path d="M296.500 73.800l4.500 5M300.800 73.500l-3.800 5.300M296 76.500h5.500M298.800 73v6"/><path d="M303.600 73.800l4.400 5M307.800 73.500l-3.700 5.300M303.200 76.500h5.400M305.800 73v6.500"/><path d="M301 76l2.600 2.500M303.500 75.500l-2.500 3"/></g>
<!-- eye icon -->
<g fill="none" stroke="#333" stroke-width="1.1"><path d="M611.700 84.300c1.600-2.500 3.700-3.700 6.200-3.700s4.600 1.200 6.200 3.700c-1.600 2.500-3.700 3.700-6.200 3.700s-4.600-1.200-6.200-3.700z"/><circle cx="617.900" cy="84.100" r="2.500"/></g>
<!-- social icons -->
<path d="M842.800 80.600h1.700c.3 1.800 1 3 1.800 3.300v-3.300h1.600v2c.9-.2 1.600-1 2-2h1.600c-.3 1.200-1 2.100-1.800 2.700.9.500 1.700 1.400 2.100 2.700h-1.800c-.4-1-1.100-1.800-2.100-1.900v1.900h-.3c-2.800 0-4.600-1.900-4.800-5.400z" fill="#fff"/>
<path d="M880.900 89v-5h1.600l.3-1.900h-1.900v-1.100c0-.6.200-.9.900-.9h1v-1.700c-.2 0-.8-.1-1.500-.1-1.500 0-2.400.9-2.400 2.500v1.300h-1.600v1.900h1.600v5z" fill="#fff"/>
<g fill="none" stroke="#fff" stroke-width="1.100"><rect x="908.500" y="79.500" width="7.600" height="7.600" rx="1.800"/><circle cx="912.300" cy="83.300" r="1.700"/></g><circle cx="914.600" cy="81" r=".55" fill="#fff"/>
<!-- phone icon header -->
<path transform="translate(949.0 73.3) scale(.0047)" d="M1600 1240q0 27-10 70.5t-21 68.5q-21 50-122 106-94 51-186 51-27 0-53-3.5t-57.5-12.5-47-14.5-55.5-20.5-49-18q-98-35-175-83-127-79-264-216t-216-264q-48-77-83-175-3-9-18-49t-20.5-55.5-14.5-47-12.5-57.5-3.5-53q0-92 51-186 56-101 106-122 25-11 68.5-21t70.5-10q14 0 21 3 18 6 53 76 11 19 30 54t35 63.5 31 53.5q3 4 17.5 25t21.5 35.5 7 28.5q0 20-28.5 50t-62 55-62 53-28.5 46q0 9 5 22.5t8.5 20.5 14 24 11.5 19q76 137 174 235t235 174q2 1 19 11.5t24 14 20.5 8.5 22.5 5q18 0 46-28.5t53-62 55-62 50-28.5q14 0 28.5 7t35.5 21.5 25 17.5q25 15 53.5 31t63.5 35 54 30q70 35 76 53 3 7 3 21z" fill="#222"/>
<!-- search icon -->
<g fill="none" stroke="#222" stroke-width="1.400"><circle cx="1049.400" cy="131.300" r="4.300"/><path d="M1052.500 134.600l3.400 3.400" stroke-linecap="round"/></g>
<!-- call button phone -->
<path transform="translate(1165.3 555.9) scale(.0291)" d="M1600 1240q0 27-10 70.5t-21 68.5q-21 50-122 106-94 51-186 51-27 0-53-3.5t-57.5-12.5-47-14.5-55.5-20.5-49-18q-98-35-175-83-127-79-264-216t-216-264q-48-77-83-175-3-9-18-49t-20.5-55.5-14.5-47-12.5-57.5-3.5-53q0-92 51-186 56-101 106-122 25-11 68.5-21t70.5-10q14 0 21 3 18 6 53 76 11 19 30 54t35 63.5 31 53.5q3 4 17.5 25t21.5 35.5 7 28.5q0 20-28.5 50t-62 55-62 53-28.5 46q0 9 5 22.5t8.5 20.5 14 24 11.5 19q76 137 174 235t235 174q2 1 19 11.5t24 14 20.5 8.5 22.5 5q18 0 46-28.5t53-62 55-62 50-28.5q14 0 28.5 7t35.5 21.5 25 17.5q25 15 53.5 31t63.5 35 54 30q70 35 76 53 3 7 3 21z" fill="#fff"/>
</svg>


</div>
<div id="sbar" class="abs"></div>
<div id="sthumb" class="abs"></div>
<svg class="abs" style="left:1271px;top:48px" width="9" height="636" viewBox="0 0 9 636"><path d="M2.300 6.800L4.500 4l2.200 2.800z" fill="#505050"/><path d="M2.300 628.200L4.500 631l2.200-2.800z" fill="#505050"/></svg>

<!-- browser chrome -->
<div id="tabstrip" class="abs"></div>
<div id="tab" class="abs"></div>
<div id="tabtitle" class="abs">Стоматология на Западном</div>
<div id="tabfade" class="abs"></div>
<div id="toolbar" class="abs"></div>
<div id="omni" class="abs"></div>
<div id="url" class="abs">https<span>://</span>dinastia-s.ru<span>/contacts/</span></div>
<div id="toolbarline" class="abs"></div>
<svg class="abs" style="left:0;top:0" width="1280" height="48" viewBox="0 0 1280 48">
<!-- favicon tooth -->
<path d="M14.300 9.200c-.4-1.900.8-3.300 2.500-3.300.9 0 1.300.4 1.900.4s1-.4 1.900-.4c1.700 0 2.900 1.400 2.500 3.300-.4 1.900-.6 4-1.300 6.300-.3.800-1.300.7-1.400-.1-.2-1.300-.3-3-1.700-3s-1.500 1.700-1.700 3c-.1.800-1.100.9-1.400.1-.7-2.300-.9-4.400-1.300-6.300z" fill="#fff1bd"/>
<!-- tab close -->
<path d="M151.300 8.300l6 6M157.300 8.300l-6 6" stroke="#dfe1e5" stroke-width="1.200"/>
<!-- new tab plus -->
<path d="M175 11.300h9M179.500 6.800v9" stroke="#dfe1e5" stroke-width="1.300"/>
<!-- back -->
<path d="M19.500 34.700h-8.500M15 30.300l-4.400 4.400 4.400 4.400" fill="none" stroke="#e8eaed" stroke-width="1.400"/>
<!-- forward -->
<path d="M32 34.700h8.500M36.500 30.300l4.400 4.400-4.400 4.400" fill="none" stroke="#77797d" stroke-width="1.400"/>
<!-- reload -->
<path d="M61.300 32.400a4.400 4.400 0 1 0 .5 3.600" fill="none" stroke="#e8eaed" stroke-width="1.400"/><path d="M62.500 29.800v4h-4z" fill="#e8eaed"/>
<!-- lock -->
<rect x="81" y="33.800" width="6" height="5" rx=".8" fill="#e8eaed"/><path d="M82.300 34v-1.300a1.700 1.700 0 0 1 3.400 0V34" fill="none" stroke="#e8eaed" stroke-width="1"/>
<!-- star -->
<path d="M1141.900 30.400l1.500 3.400 3.600.3-2.700 2.400.8 3.600-3.200-1.900-3.200 1.900.8-3.600-2.700-2.400 3.600-.3z" fill="none" stroke="#c4c7cc" stroke-width="1.100" stroke-linejoin="round"/>
<!-- ext 1 -->
<rect x="1164.700" y="30.600" width="10.400" height="9.600" rx="2" fill="#e9f4fb"/><path d="M1165 38.500c.5-3.500 2.500-6.500 6.500-7.600l-1 3c-2 1-3 2.800-3.200 5.600z" fill="#2e8fd8"/><path d="M1164.700 32.600a2 2 0 0 1 2-2h3l-5 6z" fill="#5fb1ea"/>
<!-- ext 2 -->
<defs><linearGradient id="pk" x1="0" y1="0" x2="1" y2="1"><stop offset="0" stop-color="#ff2a9d"/><stop offset=".5" stop-color="#fb1390"/><stop offset=".5" stop-color="#f77fb0"/><stop offset="1" stop-color="#fbb1a8"/></linearGradient></defs>
<rect x="1186" y="30.400" width="11" height="10.200" fill="url(#pk)"/>
<!-- ext 3 -->
<rect x="1207" y="30.200" width="11" height="10.600" fill="#6b6d70"/><rect x="1207" y="39.300" width="11" height="1.500" fill="#8a8c8f"/>
<text x="1212.500" y="38.600" font-family="'Liberation Sans',sans-serif" font-weight="bold" font-size="8.500" fill="#fff" text-anchor="middle">01</text>
<!-- separator -->
<path d="M1229.200 30v10.500" stroke="#5f6165" stroke-width="1"/>
<!-- incognito -->
<path d="M1239.800 34.200l1-3.200h5.900l1 3.200z" fill="#dadce0"/><path d="M1238.500 35h10.600" stroke="#dadce0" stroke-width="1.100"/><circle cx="1241.300" cy="38" r="1.600" fill="none" stroke="#dadce0" stroke-width="1"/><circle cx="1246.300" cy="38" r="1.600" fill="none" stroke="#dadce0" stroke-width="1"/><path d="M1242.900 37.700h1.800" stroke="#dadce0" stroke-width=".9"/>
<!-- menu dots -->
<circle cx="1265.600" cy="31.200" r="1.100" fill="#e8eaed"/><circle cx="1265.600" cy="35.200" r="1.100" fill="#e8eaed"/><circle cx="1265.600" cy="39.200" r="1.100" fill="#e8eaed"/>
<!-- window buttons -->
<g fill="none" stroke="#3f4145" stroke-width="1"><rect x="1228.500" y="2.500" width="14" height="10"/><rect x="1245.500" y="2.500" width="14" height="10"/><rect x="1263" y="2.500" width="14" height="10"/></g>
<path d="M1232 8.800h7" stroke="#e8eaed" stroke-width="1.400"/>
<g fill="none" stroke="#dfe1e5" stroke-width=".9"><rect x="1249.500" y="6.500" width="4.800" height="3.600"/><path d="M1251.500 6.500v-1.500h4.800v3.600h-2"/></g>
<path d="M1267.500 5l5 5M1272.500 5l-5 5" stroke="#e8eaed" stroke-width="1.200"/>
</svg>



<!-- taskbar -->
<div id="taskbar" class="abs"></div>
<svg class="abs" style="left:0;top:684px" width="1280" height="36" viewBox="0 684 1280 36">
<defs>
<linearGradient id="cab" x1="0" y1="0" x2="0" y2="1"><stop offset="0" stop-color="#d8d3cb"/><stop offset="1" stop-color="#a9a59e"/></linearGradient>
<linearGradient id="psg" x1="0" y1="0" x2="1" y2="1"><stop offset="0" stop-color="#ff3fa8"/><stop offset=".5" stop-color="#c24cf0"/><stop offset="1" stop-color="#7d5bf5"/></linearGradient>
<linearGradient id="mon" x1="0" y1="0" x2="1" y2="1"><stop offset="0" stop-color="#8fa8d8"/><stop offset="1" stop-color="#3f6fb8"/></linearGradient>
</defs>
<!-- active cell -->
<rect x="150.500" y="685" width="35" height="34" rx="2" fill="#566b75"/>
<!-- settings gear + wrench -->
<g>
<circle cx="19" cy="701.500" r="9.500" fill="#e6e6e6"/>
<g fill="#e6e6e6"><rect x="16.500" y="689.500" width="5" height="24" rx="1"/><rect x="7" y="699" width="24" height="5" rx="1"/><rect x="16.500" y="689.500" width="5" height="24" rx="1" transform="rotate(45 19 701.500)"/><rect x="16.500" y="689.500" width="5" height="24" rx="1" transform="rotate(-45 19 701.500)"/></g>
<circle cx="19" cy="701.500" r="4.200" fill="#c9c9c9"/>
<path d="M17.500 703l7.500-7" stroke="#f4f4f4" stroke-width="3.400" stroke-linecap="round"/><path d="M23 692.500l3.800-1.800-.6 3 2.900.4-1.800 3.400-4.300.2-1.800-2.400z" fill="#f6f6f6"/><path d="M26.300 690.700l-.8 3.600 3.600-.2" fill="none" stroke="#3e545d" stroke-width="1.600"/>
<path d="M9.500 711l9-8.500" stroke="#d8232a" stroke-width="4.800" stroke-linecap="round"/>
</g>
<!-- software bag -->
<path d="M52.500 694.500v-1a3.500 3.500 0 0 1 7 0v1" fill="none" stroke="#ee7434" stroke-width="2.200"/>
<path d="M45 693.500h22.500l.5 19.700h-23.500z" fill="#f0793a"/>
<path d="M52 709l4.200-9.500 4.200 9.500M53.500 706h5.500" fill="none" stroke="#fff" stroke-width="1.600" stroke-linejoin="round" stroke-linecap="round"/>
<!-- PhpStorm -->
<path d="M82 695l8-6 10 2.500 6 7-2 9-9 7-10-4z" fill="url(#psg)"/>
<rect x="86" y="694" width="15" height="15.500" fill="#000"/>
<text x="87.500" y="703.300" font-family="'Liberation Sans',sans-serif" font-weight="bold" font-size="7.500" fill="#fff">PS</text>
<rect x="87.500" y="705.800" width="5" height="1.100" fill="#fff"/>
<!-- file cabinet -->
<rect x="120" y="690.500" width="22" height="22.500" rx="2" fill="url(#cab)"/>
<rect x="121.500" y="694.500" width="19" height="4.500" fill="#3a3530"/><rect x="121.500" y="696" width="19" height="3" fill="#f2a860"/>
<rect x="121" y="700.500" width="20" height="11.500" rx="1" fill="#b5b1aa"/>
<rect x="127.500" y="704.500" width="7" height="4" rx=".6" fill="#efefef" stroke="#8f8b85" stroke-width=".6"/>
<!-- chrome -->
<circle cx="168.700" cy="702" r="11.500" fill="#e8453c"/>
<path d="M168.700 702l-10-5.700a11.500 11.500 0 0 0 4.300 15.700z" fill="#2ba24c"/>
<path d="M168.700 702h11.500a11.500 11.500 0 0 1-17.200 10z" fill="#fbc116"/>
<path d="M168.700 702l5.700 9.900a11.500 11.500 0 0 1-11.400.1z" fill="#fbc116"/>
<path d="M158.700 696.300a11.500 11.500 0 0 1 20.500 1.200h-10.500z" fill="#e8453c"/>
<circle cx="168.700" cy="702" r="5.300" fill="#fff"/><circle cx="168.700" cy="702" r="4.200" fill="#4a8af4"/>
<!-- sublime -->
<rect x="193" y="689.500" width="24" height="24" rx="2.500" fill="#4b4b4b"/>
<path d="M199.500 698l11-3.500v4.500l-7 2.300 7 2.400v4.600l-11 3.500v-4.600l7-2.300-7-2.300z" fill="#f89a1c"/>
<!-- filezilla -->
<rect x="230.600" y="689.500" width="24.400" height="24.300" fill="#bf0711"/>
<text x="243" y="709.300" font-family="'Liberation Sans',sans-serif" font-weight="bold" font-style="italic" font-size="19" fill="#fff" text-anchor="middle" letter-spacing="-1.500">Fz</text>
<!-- monitor -->
<path d="M268.500 689.500l24-1 .8 20.500-21 2.600z" fill="url(#mon)" stroke="#9fb2cc" stroke-width=".8"/>
<path d="M281 691.500l9.500-.3.500 15-8.500.8z" fill="#2c64ad"/>
<circle cx="275" cy="696.500" r="2.300" fill="#26304a"/><path d="M275 692.500v8M271.500 696.500h7M272.500 694l5 5M277.500 694l-5 5" stroke="#d9e3f2" stroke-width=".6"/>
<circle cx="285" cy="703.500" r="2.800" fill="#d6dde8"/><circle cx="285.300" cy="703" r="1.500" fill="#7a5540"/>
<path d="M276 712.500h8l1.500 2h-11z" fill="#c5cdd8"/>
<!-- running dots -->
<g fill="#e8682c"><circle cx="163.500" cy="717.300" r="1.100"/><circle cx="168.700" cy="717.300" r="1.100"/><circle cx="173.900" cy="717.300" r="1.100"/><circle cx="205" cy="717.300" r="1.100"/><circle cx="242.600" cy="717.300" r="1.100"/><circle cx="279.200" cy="717.300" r="1.100"/></g>
<!-- apps grid -->
<g fill="#f2fbff"><circle cx="1254.8" cy="695.7" r="1.700"/><circle cx="1261.2" cy="695.7" r="1.700"/><circle cx="1267.5" cy="695.7" r="1.700"/><circle cx="1254.8" cy="702" r="1.700"/><circle cx="1261.2" cy="702" r="1.700"/><circle cx="1267.5" cy="702" r="1.700"/><circle cx="1254.8" cy="708.3" r="1.700"/><circle cx="1261.2" cy="708.3" r="1.700"/><circle cx="1267.5" cy="708.3" r="1.700"/></g>
</svg>

</body>
</html>
